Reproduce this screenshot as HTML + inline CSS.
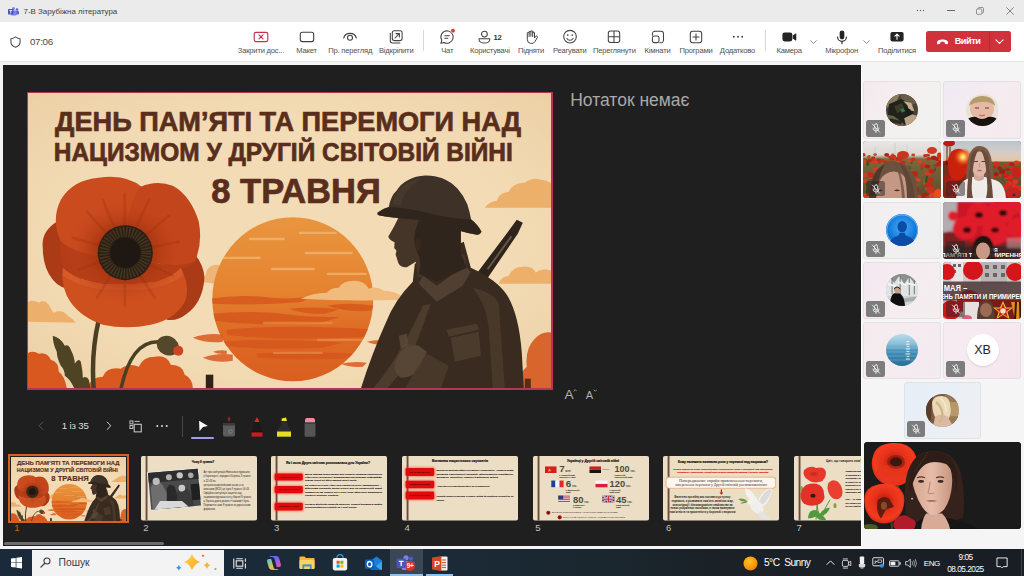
<!DOCTYPE html>
<html lang="uk">
<head>
<meta charset="utf-8">
<title>7-В Зарубіжна література</title>
<style>
*{box-sizing:border-box;margin:0;padding:0}
html,body{width:1024px;height:576px;overflow:hidden;background:#f5f5f5;font-family:"Liberation Sans",sans-serif;}
#app{position:relative;width:1024px;height:576px;overflow:hidden;background:#f5f5f5}
.abs{position:absolute}
#titlebar{left:0;top:0;width:1024px;height:22px;background:#ebebeb}
#titlebar .t{left:23.600px;top:7px;font-size:7.900px;line-height:10px;color:#3c3c3c;white-space:nowrap}
#toolbar{left:0;top:22px;width:1024px;height:38.500px;background:#fff;box-shadow:0 0.500px 1.500px rgba(0,0,0,0.16)}
.tb{position:absolute;top:0;width:0;height:40px;font-size:7.600px;letter-spacing:-0.200px;color:#505050;white-space:nowrap}
.tb svg{position:absolute;left:-10px;top:4px;width:20px;height:20px;overflow:visible}
.tb span{position:absolute;left:-40px;width:80px;top:23.900px;text-align:center;line-height:10px}
#stage{left:3.100px;top:64.800px;width:857.700px;height:481.400px;background:#1f1f1f;overflow:hidden}
#slide{background:#b83358;overflow:hidden}
#slide>svg{position:absolute;left:1.600px;top:1.600px}
#right{left:861px;top:62px;width:163px;height:487px;background:#f5f5f5}
#taskbar{left:0;top:549.300px;width:1024px;height:27px;background:linear-gradient(90deg,#1b2a3a 0%,#1b2a36 45%,#1a272f 58%,#1b2127 70%,#191e25 100%)}
.tile{position:absolute;border-radius:3px;overflow:hidden;background:#ece8ee}
#right .tile{border-radius:3.500px;box-shadow:inset 0 0 0 0.700px rgba(0,0,0,0.07)}
.badge{position:absolute;width:18.700px;height:16.200px;border-radius:2.500px;background:#7c7c7c;display:flex;align-items:center;justify-content:center}
.badge.bd{background:rgba(60,50,45,0.55)}
.av{position:absolute;border-radius:50%;overflow:hidden}
.av svg{display:block}
.sep{top:8px;width:1px;height:21px;background:#d6d6d6}
#leave{left:925.900px;top:9px;width:84.700px;height:21px;border-radius:2.500px;background:#d0323c;color:#fff;font-weight:bold;font-size:9.200px;letter-spacing:-0.450px;white-space:nowrap}
.fa{color:#b0b0b0;line-height:1;white-space:nowrap}
.tn{font-size:9.500px;line-height:11px;white-space:nowrap}
.tk{color:#fff;white-space:nowrap}
.badge.bv{background:rgba(40,34,34,0.5);height:15.700px}

</style>
</head>
<body>
<div id="app">
<div id="titlebar" class="abs">
<svg class="abs" viewBox="0 0 22 18" width="11" height="9" style="left:8px;top:6.700px"><circle cx="18" cy="5" r="2.600" fill="#5b5fc7"/><rect x="14" y="8" width="8" height="7" rx="2" fill="#5b5fc7"/><circle cx="11" cy="3.200" r="3" fill="#7b83eb"/><rect x="6" y="7" width="11" height="10" rx="2" fill="#7b83eb"/><rect x="0" y="4" width="11" height="11" rx="1.500" fill="#4b53bc"/><path d="M2.800,7 h5.400 M5.500,7 v6" stroke="#fff" stroke-width="1.600"/></svg>
<div class="abs t">7-В Зарубіжна література</div>
<svg class="abs" viewBox="0 0 12 4" width="9" height="3" style="left:915.500px;top:9px"><circle cx="2" cy="2" r="0.900" fill="#6a6a6a"/><circle cx="6" cy="2" r="0.900" fill="#6a6a6a"/><circle cx="10" cy="2" r="0.900" fill="#6a6a6a"/></svg>
<div class="abs" style="left:947px;top:10px;width:7.500px;height:1px;background:#6a6a6a"></div>
<svg class="abs" viewBox="0 0 10 10" width="8" height="8" style="left:976px;top:6.500px"><rect x="0.600" y="2.400" width="6.800" height="6.800" rx="1.600" fill="none" stroke="#6a6a6a" stroke-width="0.900"/><path d="M2.600,2.200 v-0.200 a1.400,1.400 0 0 1 1.400,-1.400 h4 a1.400,1.400 0 0 1 1.400,1.400 v4 a1.400,1.400 0 0 1 -1.400,1.400 h-0.400" fill="none" stroke="#6a6a6a" stroke-width="0.900"/></svg>
<svg class="abs" viewBox="0 0 10 10" width="8" height="8" style="left:1005.500px;top:6.800px"><path d="M0.800,0.800 l8.400,8.400 M9.200,0.800 l-8.400,8.400" stroke="#6a6a6a" stroke-width="1" stroke-linecap="round"/></svg>
</div>
<div id="toolbar" class="abs">
<svg class="abs" viewBox="0 0 12 13" width="11" height="12" style="left:9.500px;top:13.500px"><path d="M6,1 C7.500,2.200 9.200,2.800 11,2.900 V6.500 C11,9.300 9,11.200 6,12.200 C3,11.200 1,9.300 1,6.500 V2.900 C2.800,2.800 4.500,2.200 6,1z" fill="none" stroke="#424242" stroke-width="1.100" stroke-linejoin="round"/></svg>
<div class="abs" style="left:30px;top:14px;font-size:9.800px;line-height:11px;color:#4a4a4a;letter-spacing:-0.350px" id="tmr">07:06</div>
<div class="tb" style="left:261px"><svg viewBox="0 0 20 20" width="20" height="20" style="left:-10.0px;top:4.6px;"><rect x="3.200" y="5.300" width="13.600" height="9.300" rx="1.800" fill="none" stroke="#c4314b" stroke-width="1.150"/><path d="M8,7.900 l4,4 M12,7.900 l-4,4" stroke="#c4314b" stroke-width="1.150" stroke-linecap="round"/></svg><span>Закрити дос...</span></div><div class="tb" style="left:306.5px"><svg viewBox="0 0 20 20" width="20" height="20" style="left:-10.0px;top:4.6px;"><rect x="3.300" y="5.300" width="13.400" height="9.300" rx="2" fill="none" stroke="#424242" stroke-width="1.100"/></svg><span>Макет</span></div><div class="tb" style="left:350.2px"><svg viewBox="0 0 20 20" width="20" height="20" style="left:-10.0px;top:4.6px;"><path d="M3.700,11 C5.200,4.800 14.800,4.800 16.300,11" fill="none" stroke="#424242" stroke-width="1.100" stroke-linecap="round"/><circle cx="10" cy="10.800" r="2.500" fill="none" stroke="#424242" stroke-width="1.100"/></svg><span>Пр. перегляд</span></div><div class="tb" style="left:396.2px"><svg viewBox="0 0 20 20" width="20" height="20" style="left:-10.0px;top:4.6px;"><rect x="6.300" y="3.800" width="9.800" height="9.800" rx="2" fill="none" stroke="#424242" stroke-width="1.050"/><path d="M4.300,6.200 v7.500 a2.200,2.200 0 0 0 2.200,2.200 h7.400" fill="none" stroke="#424242" stroke-width="1.050" stroke-linecap="round"/><path d="M9,11 l4.300,-4.300 M10,6.600 h3.400 v3.400" fill="none" stroke="#424242" stroke-width="1.050" stroke-linecap="round" stroke-linejoin="round"/></svg><span>Відкріпити</span></div><div class="tb" style="left:447.2px"><svg viewBox="0 0 20 20" width="20" height="20" style="left:-10.0px;top:4.6px;"><path d="M10,3.800 a6.200,6.200 0 1 1 -3,11.650 l-3.100,0.900 l0.900,-3.100 A6.200,6.200 0 0 1 10,3.800z" fill="none" stroke="#424242" stroke-width="1.050" stroke-linejoin="round"/><path d="M7.800,8.700 h4.600 M7.800,11.300 h3" stroke="#424242" stroke-width="1.050" stroke-linecap="round"/><circle cx="16" cy="3.700" r="2.300" fill="#cc4a31" stroke="#fff" stroke-width="0.600"/></svg><span>Чат</span></div><div class="tb" style="left:489.8px"><svg viewBox="0 0 20 20" width="20" height="20" style="left:-10.0px;top:4.6px;"><circle cx="4.400" cy="7.100" r="2.900" fill="none" stroke="#424242" stroke-width="1.050"/><path d="M-1,11.800 h10.800 v0.600 a5.400,3.600 0 0 1 -10.800,0z" fill="none" stroke="#424242" stroke-width="1.050" stroke-linejoin="round"/><text x="13.600" y="12.700" font-family="'Liberation Sans',sans-serif" font-weight="bold" font-size="7.600" fill="#333">12</text></svg><span>Користувачі</span></div><div class="tb" style="left:531.0px"><svg viewBox="0 0 20 20" width="20" height="20" style="left:-10.0px;top:4.6px;"><path d="M6.300,11.500 V6.200 a0.900,0.900 0 0 1 1.800,0 V5 a0.900,0.900 0 0 1 1.800,0 V4.700 a0.900,0.900 0 0 1 1.800,0 V6 a0.900,0.900 0 0 1 1.800,0 V11 l1.300,-1.700 a1,1 0 0 1 1.600,1.100 l-2.300,4 a4.300,4.300 0 0 1 -3.700,2.100 h-0.600 a3.800,3.800 0 0 1 -3.500,-3.800z M8.100,6.200 V9.500 M9.900,5 V9.300 M11.700,5 V9.500" fill="none" stroke="#424242" stroke-width="1" stroke-linejoin="round" stroke-linecap="round"/></svg><span>Підняти</span></div><div class="tb" style="left:569.8px"><svg viewBox="0 0 20 20" width="20" height="20" style="left:-10.0px;top:4.6px;"><circle cx="10" cy="9.700" r="6.300" fill="none" stroke="#424242" stroke-width="1.050"/><circle cx="7.700" cy="8" r="0.850" fill="#424242"/><circle cx="12.300" cy="8" r="0.850" fill="#424242"/><path d="M6.900,11.400 a3.600,3.600 0 0 0 6.200,0" fill="none" stroke="#424242" stroke-width="1.050" stroke-linecap="round"/></svg><span>Реагувати</span></div><div class="tb" style="left:614.3px"><svg viewBox="0 0 20 20" width="20" height="20" style="left:-10.0px;top:4.6px;"><rect x="4.300" y="4" width="11.400" height="11.400" rx="2.200" fill="none" stroke="#424242" stroke-width="1.050"/><path d="M10,4 v11.400 M4.300,9.700 h11.400" stroke="#424242" stroke-width="1.050"/></svg><span>Переглянути</span></div><div class="tb" style="left:657.5px"><svg viewBox="0 0 20 20" width="20" height="20" style="left:-10.0px;top:4.6px;"><path d="M6.800,4.300 h6.300 a2.400,2.400 0 0 1 2.400,2.400 v6.600 a2.400,2.400 0 0 1 -2.400,2.400 h-1.400" fill="none" stroke="#424242" stroke-width="1.050" stroke-linecap="round"/><rect x="4.400" y="9" width="6.600" height="6.600" rx="1.900" fill="none" stroke="#424242" stroke-width="1.050"/><path d="M4.400,8.200 v-1.500 a2.400,2.400 0 0 1 2.400,-2.400" fill="none" stroke="#424242" stroke-width="1.050" stroke-linecap="round"/></svg><span>Кімнати</span></div><div class="tb" style="left:696px"><svg viewBox="0 0 20 20" width="20" height="20" style="left:-10.0px;top:4.6px;"><rect x="4.300" y="4.300" width="11.400" height="11.400" rx="2.400" fill="none" stroke="#424242" stroke-width="1.050"/><path d="M10,6.900 v6.200 M6.900,10 h6.200" stroke="#424242" stroke-width="1.050" stroke-linecap="round"/></svg><span>Програми</span></div><div class="tb" style="left:737.5px"><svg viewBox="0 0 20 20" width="20" height="20" style="left:-10.0px;top:4.6px;"><circle cx="5.800" cy="9.700" r="0.950" fill="#424242"/><circle cx="10" cy="9.700" r="0.950" fill="#424242"/><circle cx="14.200" cy="9.700" r="0.950" fill="#424242"/></svg><span>Додатково</span></div><div class="tb" style="left:789.2px"><svg viewBox="0 0 20 20" width="20" height="20" style="left:-10.0px;top:4.6px;"><rect x="3.400" y="5.500" width="10" height="8.900" rx="2.300" fill="#242424"/><path d="M13.900,8.600 l2.600,-2 a0.500,0.500 0 0 1 0.800,0.400 v6 a0.500,0.500 0 0 1 -0.800,0.400 l-2.600,-2z" fill="#242424"/></svg><span>Камера</span></div><div class="tb" style="left:841.7px"><svg viewBox="0 0 20 20" width="20" height="20" style="left:-10.0px;top:4.6px;"><rect x="7.650" y="3.400" width="4.700" height="9" rx="2.350" fill="#242424"/><path d="M5.600,10 a4.400,4.400 0 0 0 8.800,0 M10,14.500 v2.300" fill="none" stroke="#242424" stroke-width="1.100" stroke-linecap="round"/></svg><span>Мікрофон</span></div><div class="tb" style="left:897px"><svg viewBox="0 0 20 20" width="20" height="20" style="left:-10.0px;top:4.6px;"><rect x="3.400" y="5" width="13.200" height="9.400" rx="1.800" fill="#242424"/><path d="M10,12.300 v-5 M7.900,9.200 l2.100,-2.100 l2.100,2.100" fill="none" stroke="#fff" stroke-width="1.100" stroke-linecap="round" stroke-linejoin="round"/></svg><span>Поділитися</span></div>
<div class="abs sep" style="left:422.500px"></div>
<div class="abs sep" style="left:764.500px"></div>
<svg class="abs" viewBox="0 0 10 6" width="7" height="4.200" style="left:809.5px;top:17.500px"><path d="M1,1 l4,4 l4,-4" fill="none" stroke="#6a6a6a" stroke-width="1.100" stroke-linecap="round" stroke-linejoin="round"/></svg><svg class="abs" viewBox="0 0 10 6" width="7" height="4.200" style="left:862.8px;top:17.500px"><path d="M1,1 l4,4 l4,-4" fill="none" stroke="#6a6a6a" stroke-width="1.100" stroke-linecap="round" stroke-linejoin="round"/></svg>
<div id="leave" class="abs"><svg class="abs" viewBox="0 0 16 8" width="13" height="6" style="left:10px;top:7.700px"><path d="M0.600,5 C0.600,2 4,0.600 8,0.600 S15.400,2 15.400,5 c0,1.200 -0.400,2 -1.200,2 l-2.400,-0.500 c-0.600,-0.150 -0.900,-0.600 -0.900,-1.200 v-1.100 c-1.800,-0.600 -4,-0.600 -5.800,0 v1.100 c0,0.600 -0.300,1.050 -0.900,1.200 l-2.400,0.500 C1,7 0.600,6.200 0.600,5z" fill="#fff"/></svg><span class="abs" style="left:28.800px;top:5.300px;line-height:11px">Вийти</span><div class="abs" style="left:63.200px;top:0;width:1px;height:21px;background:rgba(120,0,10,0.22)"></div><svg class="abs" viewBox="0 0 10 6" width="9" height="5.400" style="left:69.300px;top:8.300px"><path d="M1,1 l4,4 l4,-4" fill="none" stroke="#fff" stroke-width="1.200" stroke-linecap="round" stroke-linejoin="round"/></svg></div>
</div>
<div id="stage" class="abs">
<div id="slide" class="abs" style="left:23.5px;top:26.9px;width:526.400px;height:298.300px"><svg width="522.6" height="294.9" viewBox="1.2 1.3 522.6 294.9" preserveAspectRatio="none" style="display:block;">
<defs>
<linearGradient id="msun" x1="0" y1="0" x2="0" y2="1"><stop offset="0" stop-color="#e9953f"/><stop offset="0.45" stop-color="#e5832f"/><stop offset="0.7" stop-color="#de6a24"/><stop offset="1" stop-color="#d95f20"/></linearGradient>
<radialGradient id="mpop" cx="0.5" cy="0.5" r="0.5"><stop offset="0" stop-color="#8c2609"/><stop offset="0.45" stop-color="#a5330f" stop-opacity="0.95"/><stop offset="0.72" stop-color="#b83e16" stop-opacity="0.45"/><stop offset="1" stop-color="#c94a1d" stop-opacity="0"/></radialGradient>
<radialGradient id="mvig" cx="0.5" cy="0.5" r="0.75"><stop offset="0.55" stop-color="#d9a35f" stop-opacity="0"/><stop offset="1" stop-color="#c98a48" stop-opacity="0.18"/></radialGradient><clipPath id="mclip"><rect x="0" y="0" width="525" height="297"/></clipPath>
<clipPath id="msunclip"><ellipse cx="266" cy="207.600" rx="80.500" ry="82"/></clipPath>
</defs>
<g clip-path="url(#mclip)">
<rect width="525" height="297" fill="#f2dbb5"/><rect width="525" height="297" fill="url(#mvig)"/>
<!-- clouds -->
<path fill="#ecb06c" d="M0,230 L0,211 q6,-4 12,0 q5,-4 10,2 q3,6 5,8 q8,-4 14,3 q5,3 8,7 z"/>
<path fill="#edb678" d="M172,190 q2,-6 7,-7 q1,-9 10,-10 q9,0 11,8 q6,-4 12,1 q8,-1 12,4 q10,0 16,3 q6,1 10,3 l-4,1 q-40,1 -74,-3z"/>
<path fill="#edb06a" d="M458,116 q4,-6 12,-7 q2,-8 12,-9 q4,-9 16,-9 q8,-6 16,-3 q8,1 11,4 L525,116 z"/>
<path fill="#edb06a" d="M472,192 q2,-7 10,-8 q4,-9 14,-9 q10,-1 13,6 q6,-5 16,-2 L525,192 z"/>
<!-- sun -->
<ellipse cx="266" cy="207.600" rx="80.500" ry="82" fill="url(#msun)"/>
<g clip-path="url(#msunclip)">
<g fill="#f2bb78" opacity="0.7">
<rect x="222" y="146" width="36" height="2.600" rx="1.300"/><rect x="272" y="140" width="38" height="2.400" rx="1.200"/>
<rect x="278" y="160" width="48" height="2.600" rx="1.300"/><rect x="190" y="165" width="44" height="2.200" rx="1.100"/>
<rect x="244" y="176" width="44" height="2.600" rx="1.300"/><rect x="300" y="181" width="40" height="2.200" rx="1.100"/>
</g>
<g fill="#d5561c" opacity="0.8">
<path d="M184,207 q30,-5 60,-1 q20,2 38,-1 l-6,5 q-40,4 -92,2z"/>
<path d="M262,217 q30,-3 50,1 l-14,4 q-20,1 -36,-5z"/>
<path d="M300,214 q20,-4 48,0 l-4,5 q-24,2 -44,-5z"/>
<path d="M186,222 q40,-4 78,1 q24,3 50,2 l-20,6 q-60,4 -108,-2z"/>
<path d="M200,238 q60,-6 150,0 l-10,7 q-80,5 -140,-2z"/>
<path d="M196,250 q50,-4 120,1 l-20,5 q-60,3 -100,-2z"/>
<path d="M230,262 q40,-3 100,0 l-14,5 q-50,2 -86,-1z"/>
</g>
<g fill="#ec9a50" opacity="0.55">
<rect x="236" y="230" width="70" height="2.600" rx="1.300"/><rect x="290" y="247" width="52" height="2.400" rx="1.200"/><rect x="246" y="260" width="50" height="2.200" rx="1.100"/>
</g>
</g>
<path fill="#d85a1e" opacity="0.85" d="M166,246 q14,-5 30,-3 l0,7 q-16,2 -30,-4z M176,266 q14,-5 30,-3 l0,6 q-16,3 -30,-3z M186,260 q8,-2 14,-1 l0,3 q-8,1 -14,-2z M340,250 q10,-3 24,-1 l-2,4 q-12,1 -22,-3z M314,272 q14,-3 26,-1 l-4,4 q-12,1 -22,-3z"/>
<!-- cloud over sun -->
<path fill="#f0bb7c" d="M274,207 q12,-6 26,-6 q4,-5 12,-5 q4,-7 15,-7 q11,0 15,8 q8,-3 15,2 q10,0 20,6 l-3,3 q-50,2 -100,-1z"/>
<!-- bottom bushes -->
<path fill="#d9581f" d="M0,297 L0,262 q6,-4 12,0 q8,-2 12,6 q8,2 8,12 q6,4 8,17 z"/>
<path fill="#d9581f" d="M60,297 q4,-12 16,-12 q4,-10 18,-8 q8,-6 18,-2 q4,-10 16,-10 q12,-2 16,8 q12,0 14,10 q8,4 8,14 z"/>
<path fill="#d8652c" d="M494,297 q-2,-16 6,-22 q-2,-18 8,-28 q8,-8 17,-6 L525,297 z"/>
<!-- leaf -->
<path fill="#4e4424" d="M26,244 q8,2 12,10 q4,-2 6,4 q4,8 4,14 q4,-6 6,-2 q2,10 2,16 q4,-2 6,2 l2,10 l-16,0 q-4,-10 -10,-14 q0,-6 -4,-10 q-4,-8 -4,-14 q-4,-8 -4,-16z"/>
<!-- stems -->
<path fill="none" stroke="#4a3f23" stroke-width="4.5" stroke-linecap="round" d="M72,228 Q64,262 67,298"/>
<path fill="none" stroke="#4a3f23" stroke-width="3.5" stroke-linecap="round" d="M131,250 Q104,250 94,298"/>
<!-- bud -->
<ellipse cx="141" cy="254" rx="11.5" ry="9.5" fill="#54472a" transform="rotate(25 141 254)"/>
<circle cx="151.500" cy="259" r="5" fill="#cf4420"/>
<!-- poppy -->
<g>
<path d="M30,130 Q14,140 16,156 Q16,176 26,188 Q34,198 48,198 L70,160 Z" fill="#ab3b17"/>
<path d="M166,160 Q180,176 177,192 Q174,212 160,222 Q150,230 140,228 L120,180 Z" fill="#ab3b17"/>
<path d="M98.500,161 Q60,170 34,150 Q24,128 34,108 Q46,88 72,86 Q100,82 116,96 Q122,120 98.500,161 Z" fill="#ca4b1e"/>
<path d="M98.500,161 Q100,110 114,95 Q130,88 146,94 Q164,104 172,130 Q176,152 168,170 Q140,180 98.500,161 Z" fill="#c2451b"/>
<path d="M36,176 Q60,196 98.500,192 Q136,194 154,176 Q164,196 158,210 Q148,228 124,233 Q100,238 76,233 Q50,224 40,204 Q34,190 36,176 Z" fill="#cf501f"/>
<path d="M36,176 Q60,196 98.500,192 Q136,194 154,176 Q156,180 156,184 Q134,200 98.500,198 Q60,200 36,184 Z" fill="#dc6530" opacity="0.55"/>
<path d="M34,150 Q60,170 98.500,161 Q140,180 168,170 Q164,176 154,176 Q136,194 98.500,192 Q60,196 36,176 Q32,164 34,150z" fill="#b43d17"/>
<ellipse cx="98" cy="160" rx="60" ry="54" fill="url(#mpop)" opacity="0.9"/>
<g stroke="#8e2a0c" stroke-width="2.600" opacity="0.22" stroke-linecap="round">
<path d="M98,161 L60,120 M98,161 L76,108 M98,161 L98,102 M98,161 L122,108 M98,161 L142,124 M98,161 L152,150 M98,161 L46,146 M98,161 L52,178 M98,161 L70,206 M98,161 L98,214 M98,161 L128,206 M98,161 L146,184"/>
</g>
<circle cx="98.500" cy="161" r="27.500" fill="#2b2016"/>
<circle cx="98.500" cy="161" r="21" fill="none" stroke="#43341f" stroke-width="10" stroke-dasharray="1.500 1.500"/>
<circle cx="98.500" cy="161" r="15" fill="#1f1711"/>
</g>
<!-- post -->
<rect x="179" y="283" width="7.500" height="14" fill="#2f2219"/>
<rect x="498" y="287" width="6" height="10" fill="#5a2c18"/>
<!-- rifle -->
<path fill="#2f241b" d="M490,128 l6,3 l-5,11 l-32,47 l-10,-6 l30,-40 z"/>
<path fill="#6a5a48" d="M484,144 l1.500,1 l-24,33 l-1.500,-1z"/>
<!-- soldier body -->
<path fill="#3a2b20" d="M334,297 Q345,262 359,231 Q368,208 386,190 L388,172 L437,150 L444,176 Q470,188 480,203 Q492,222 495,261 L497,297 Z"/>
<!-- lighter uniform details -->
<path fill="#514032" d="M392,192 l18,18 l26,-16 l8,-14 l-6,-6 l-28,20 l-14,-10z"/>
<path fill="#4c3c2e" d="M396,214 l8,-2 l-22,60 l-22,25 l-14,0 q26,-30 50,-83z"/>
<path fill="#4c3c2d" d="M446,196 q20,4 26,16 l6,85 l-12,0 l-4,-60 q-2,-24 -16,-41z" opacity="0.8"/>
<path fill="#4e3e30" d="M420,238 l30,-6 l2,6 l-30,7z M424,246 l28,-6 l2,24 l-26,6z" opacity="0.85"/>
<path fill="#5b4938" d="M372,244 l8,-2 l2,12 l-8,3z" opacity="0.85"/>
<!-- hand -->
<path fill="#574535" d="M372,262 q8,-10 20,-8 l8,6 l-4,10 q-6,16 -22,16 q-8,-6 -6,-14z"/>
<path fill="#4a3a2b" d="M400,262 l22,12 l-8,23 l-36,0 q10,-18 22,-35z" opacity="0.9"/>
<!-- head -->
<path fill="#443528" d="M373,116 L371.600,126 L367,135.300 L361.500,144.800 Q362,148 367.800,150.500 L367.400,156.300 L369.700,159 L368.800,162.500 L371.600,171.500 Q374,176 380,175.500 L389,170 L391,186 L440,176 L438,164 L434,162 L434,120 Z"/>
<path fill="#30251c" d="M392,122 L434,126 L434,162 L440,176 L410,190 L392,182 Q396,170 390,160 Q384,146 392,130z"/>
<path fill="#3a2d22" d="M388,150 q4,-6 6,0 q0,6 -3,10 q-3,-4 -3,-10z" opacity="0.8"/>
<!-- helmet -->
<path fill="#3e3127" d="M350.600,121 Q355,117 362,115.200 Q364,104 369.700,99 Q374,92 381,88.500 Q389,84 398.400,83.700 Q408,83.500 415.500,86.600 Q424,90 430.800,97 Q437,104 440.400,112.400 Q443,120 444.200,127.600 Q451,133 454.700,140 Q453,143.500 450,143 Q441,141.500 432.700,139 Q420,135.500 409.800,132.400 Q398,129.500 387,127.600 Q376,126.500 366,125.700 Q358,125 352.500,123.800 Q350,123 350.600,121 Z"/>
<path fill="#4d3f31" d="M366,112 Q368,102 375,95 Q384,88 396,86.500 Q386,92 380,100 Q375,107 374,114 z" opacity="0.6"/>
<path fill="#2c221a" d="M362,115.200 Q380,116 400,121 Q424,127 444.200,127.600 Q451,133 454.700,140 Q453,143.500 450,143 Q441,141.500 432.700,139 Q420,135.500 409.800,132.400 Q398,129.500 387,127.600 Q376,126.500 366,125.700 Q358,125 352.500,123.800 Q350,123 350.600,121 Q355,117 362,115.200z" opacity="0.75"/>

<g font-family="'Liberation Sans',sans-serif" font-weight="bold" fill="#5a2e1d" stroke="#5a2e1d" stroke-width="0.700" stroke-linejoin="round">
<text x="28.300" y="39.250" font-size="27.800" textLength="466" lengthAdjust="spacingAndGlyphs">ДЕНЬ ПАМ’ЯТІ ТА ПЕРЕМОГИ НАД</text>
<text x="27" y="68.900" font-size="25.400" textLength="459" lengthAdjust="spacingAndGlyphs">НАЦИЗМОМ У ДРУГІЙ СВІТОВІЙ ВІЙНІ</text>
<text x="184.500" y="111.100" font-size="35.500" textLength="169.500" lengthAdjust="spacingAndGlyphs">8 ТРАВНЯ</text>
</g>
</g></svg></div>
<div class="abs" style="left:567.1px;top:25.4px;font-size:17.500px;line-height:20px;color:#a9a9a9;white-space:nowrap" id="notes">Нотаток немає</div>
<div class="abs fa" style="left:561.3px;top:322.9px;font-size:13.600px">A</div><svg class="abs" viewBox="0 0 6 4" width="4.500" height="3" style="left:569.7px;top:324.2px"><path d="M0.800,3.200 L3,0.900 L5.200,3.200" fill="none" stroke="#b0b0b0" stroke-width="1"/></svg>
<div class="abs fa" style="left:582.7px;top:325.1px;font-size:11px">A</div><svg class="abs" viewBox="0 0 6 4" width="4.500" height="3" style="left:589.8px;top:324.2px"><path d="M0.800,0.800 L3,3.100 L5.200,0.800" fill="none" stroke="#b0b0b0" stroke-width="1"/></svg>
<svg class="abs" viewBox="0 0 8 12" width="6" height="9.500" style="left:35.2px;top:356.7px"><path d="M6.500,1 L1.500,6 L6.500,11" fill="none" stroke="#5a5a5a" stroke-width="1.300" stroke-linecap="round" stroke-linejoin="round"/></svg>
<div class="abs" style="left:58.7px;top:355.5px;font-size:9.600px;line-height:12px;color:#dedede;white-space:nowrap;letter-spacing:-0.150px" id="cnt">1 із 35</div>
<svg class="abs" viewBox="0 0 8 12" width="6" height="9.500" style="left:103.3px;top:356.7px"><path d="M1.500,1 L6.500,6 L1.500,11" fill="none" stroke="#d6d6d6" stroke-width="1.300" stroke-linecap="round" stroke-linejoin="round"/></svg>
<svg class="abs" viewBox="0 0 14 14" width="13" height="13" style="left:126.1px;top:355.0px"><rect x="1" y="1" width="3.200" height="3.200" fill="none" stroke="#d0d0d0" stroke-width="1"/><rect x="1" y="6" width="3.200" height="3.200" fill="none" stroke="#d0d0d0" stroke-width="1"/><path d="M6,1.500 h5.500" stroke="#d0d0d0" stroke-width="1"/><rect x="5.600" y="4.600" width="7.600" height="8.200" fill="#1f1f1f" stroke="#d0d0d0" stroke-width="1.100"/></svg>
<svg class="abs" viewBox="0 0 14 4" width="14" height="4" style="left:152.1px;top:359.5px"><circle cx="2.300" cy="2" r="1" fill="#dcdcdc"/><circle cx="7" cy="2" r="1" fill="#dcdcdc"/><circle cx="11.700" cy="2" r="1" fill="#dcdcdc"/></svg>
<div class="abs" style="left:179.1px;top:351.2px;width:1px;height:21.500px;background:#484848"></div>
<svg class="abs" viewBox="0 0 12 13" width="11" height="12" style="left:194.5px;top:355.6px"><path d="M1.200,0.800 L10.800,6.600 L5.400,7.600 L1.600,12.200 Z" fill="#fff"/></svg>
<div class="abs" style="left:188.1px;top:372.2px;width:22.500px;height:1.800px;border-radius:1px;background:#9ea0e6"></div>
<svg class="abs" viewBox="0 0 16 22" width="16" height="22" style="left:218.3px;top:350.8px"><path d="M8,1.200 v4" stroke="#d82020" stroke-width="1.200"/><path d="M6.500,2.800 h3" stroke="#d82020" stroke-width="0.800"/><rect x="2" y="7" width="12" height="13.500" rx="1.800" fill="#5c5c5c"/><rect x="2" y="7" width="12" height="2.500" rx="1.200" fill="#3a3a3a"/><circle cx="9.500" cy="15.500" r="1.800" fill="none" stroke="#8a8a8a" stroke-width="0.800"/></svg>
<svg class="abs" viewBox="0 0 16 22" width="16" height="22" style="left:245.5px;top:350.8px"><path d="M8,1 L10.600,6 L5.400,6 Z" fill="#e02828"/><path d="M5.400,6 L10.600,6 L13.400,16 L2.600,16 Z" fill="#1a1a1a"/><rect x="2.600" y="16" width="10.800" height="4.600" fill="#c81c24"/><path d="M2.600,16 h10.800" stroke="#111" stroke-width="0.800"/></svg>
<svg class="abs" viewBox="0 0 18 22" width="18" height="22" style="left:271.5px;top:350.8px"><path d="M6.600,2.600 L11,1.400 L12,5 L6.600,5 Z" fill="#f0e030"/><path d="M6.400,5 L12.200,5 L13,9 L16,15.500 L2,15.500 L5.600,9 Z" fill="#2c2c2c"/><rect x="2" y="15.500" width="14" height="5.200" fill="#e6dc28"/></svg>
<svg class="abs" viewBox="0 0 14 22" width="14" height="22" style="left:299.7px;top:350.8px"><rect x="2" y="2" width="10" height="7" rx="2" fill="#f08aa0"/><rect x="1.600" y="6.400" width="10.800" height="14.400" rx="1.400" fill="#555"/><rect x="1.600" y="6.400" width="10.800" height="1.400" fill="#3c3c3c"/></svg>
<div class="abs" style="left:4.9px;top:389.0px;width:120.600px;height:69.600px;border:2px solid #d4611f;padding:0.800px;background:#1f1f1f"><div style="width:100%;height:100%;overflow:hidden"><svg width="115" height="64" viewBox="1.2 1.3 522.6 294.9" preserveAspectRatio="none" style="display:block;">
<defs>
<linearGradient id="tsun" x1="0" y1="0" x2="0" y2="1"><stop offset="0" stop-color="#e9953f"/><stop offset="0.45" stop-color="#e5832f"/><stop offset="0.7" stop-color="#de6a24"/><stop offset="1" stop-color="#d95f20"/></linearGradient>
<radialGradient id="tpop" cx="0.5" cy="0.5" r="0.5"><stop offset="0" stop-color="#8c2609"/><stop offset="0.45" stop-color="#a5330f" stop-opacity="0.95"/><stop offset="0.72" stop-color="#b83e16" stop-opacity="0.45"/><stop offset="1" stop-color="#c94a1d" stop-opacity="0"/></radialGradient>
<radialGradient id="tvig" cx="0.5" cy="0.5" r="0.75"><stop offset="0.55" stop-color="#d9a35f" stop-opacity="0"/><stop offset="1" stop-color="#c98a48" stop-opacity="0.18"/></radialGradient><clipPath id="tclip"><rect x="0" y="0" width="525" height="297"/></clipPath>
<clipPath id="tsunclip"><ellipse cx="266" cy="207.600" rx="80.500" ry="82"/></clipPath>
</defs>
<g clip-path="url(#tclip)">
<rect width="525" height="297" fill="#f2dbb5"/><rect width="525" height="297" fill="url(#tvig)"/>
<!-- clouds -->
<path fill="#ecb06c" d="M0,230 L0,211 q6,-4 12,0 q5,-4 10,2 q3,6 5,8 q8,-4 14,3 q5,3 8,7 z"/>
<path fill="#edb678" d="M172,190 q2,-6 7,-7 q1,-9 10,-10 q9,0 11,8 q6,-4 12,1 q8,-1 12,4 q10,0 16,3 q6,1 10,3 l-4,1 q-40,1 -74,-3z"/>
<path fill="#edb06a" d="M458,116 q4,-6 12,-7 q2,-8 12,-9 q4,-9 16,-9 q8,-6 16,-3 q8,1 11,4 L525,116 z"/>
<path fill="#edb06a" d="M472,192 q2,-7 10,-8 q4,-9 14,-9 q10,-1 13,6 q6,-5 16,-2 L525,192 z"/>
<!-- sun -->
<ellipse cx="266" cy="207.600" rx="80.500" ry="82" fill="url(#tsun)"/>
<g clip-path="url(#tsunclip)">
<g fill="#f2bb78" opacity="0.7">
<rect x="222" y="146" width="36" height="2.600" rx="1.300"/><rect x="272" y="140" width="38" height="2.400" rx="1.200"/>
<rect x="278" y="160" width="48" height="2.600" rx="1.300"/><rect x="190" y="165" width="44" height="2.200" rx="1.100"/>
<rect x="244" y="176" width="44" height="2.600" rx="1.300"/><rect x="300" y="181" width="40" height="2.200" rx="1.100"/>
</g>
<g fill="#d5561c" opacity="0.8">
<path d="M184,207 q30,-5 60,-1 q20,2 38,-1 l-6,5 q-40,4 -92,2z"/>
<path d="M262,217 q30,-3 50,1 l-14,4 q-20,1 -36,-5z"/>
<path d="M300,214 q20,-4 48,0 l-4,5 q-24,2 -44,-5z"/>
<path d="M186,222 q40,-4 78,1 q24,3 50,2 l-20,6 q-60,4 -108,-2z"/>
<path d="M200,238 q60,-6 150,0 l-10,7 q-80,5 -140,-2z"/>
<path d="M196,250 q50,-4 120,1 l-20,5 q-60,3 -100,-2z"/>
<path d="M230,262 q40,-3 100,0 l-14,5 q-50,2 -86,-1z"/>
</g>
<g fill="#ec9a50" opacity="0.55">
<rect x="236" y="230" width="70" height="2.600" rx="1.300"/><rect x="290" y="247" width="52" height="2.400" rx="1.200"/><rect x="246" y="260" width="50" height="2.200" rx="1.100"/>
</g>
</g>
<path fill="#d85a1e" opacity="0.85" d="M166,246 q14,-5 30,-3 l0,7 q-16,2 -30,-4z M176,266 q14,-5 30,-3 l0,6 q-16,3 -30,-3z M186,260 q8,-2 14,-1 l0,3 q-8,1 -14,-2z M340,250 q10,-3 24,-1 l-2,4 q-12,1 -22,-3z M314,272 q14,-3 26,-1 l-4,4 q-12,1 -22,-3z"/>
<!-- cloud over sun -->
<path fill="#f0bb7c" d="M274,207 q12,-6 26,-6 q4,-5 12,-5 q4,-7 15,-7 q11,0 15,8 q8,-3 15,2 q10,0 20,6 l-3,3 q-50,2 -100,-1z"/>
<!-- bottom bushes -->
<path fill="#d9581f" d="M0,297 L0,262 q6,-4 12,0 q8,-2 12,6 q8,2 8,12 q6,4 8,17 z"/>
<path fill="#d9581f" d="M60,297 q4,-12 16,-12 q4,-10 18,-8 q8,-6 18,-2 q4,-10 16,-10 q12,-2 16,8 q12,0 14,10 q8,4 8,14 z"/>
<path fill="#d8652c" d="M494,297 q-2,-16 6,-22 q-2,-18 8,-28 q8,-8 17,-6 L525,297 z"/>
<!-- leaf -->
<path fill="#4e4424" d="M26,244 q8,2 12,10 q4,-2 6,4 q4,8 4,14 q4,-6 6,-2 q2,10 2,16 q4,-2 6,2 l2,10 l-16,0 q-4,-10 -10,-14 q0,-6 -4,-10 q-4,-8 -4,-14 q-4,-8 -4,-16z"/>
<!-- stems -->
<path fill="none" stroke="#4a3f23" stroke-width="4.5" stroke-linecap="round" d="M72,228 Q64,262 67,298"/>
<path fill="none" stroke="#4a3f23" stroke-width="3.5" stroke-linecap="round" d="M131,250 Q104,250 94,298"/>
<!-- bud -->
<ellipse cx="141" cy="254" rx="11.5" ry="9.5" fill="#54472a" transform="rotate(25 141 254)"/>
<circle cx="151.500" cy="259" r="5" fill="#cf4420"/>
<!-- poppy -->
<g>
<path d="M30,130 Q14,140 16,156 Q16,176 26,188 Q34,198 48,198 L70,160 Z" fill="#ab3b17"/>
<path d="M166,160 Q180,176 177,192 Q174,212 160,222 Q150,230 140,228 L120,180 Z" fill="#ab3b17"/>
<path d="M98.500,161 Q60,170 34,150 Q24,128 34,108 Q46,88 72,86 Q100,82 116,96 Q122,120 98.500,161 Z" fill="#ca4b1e"/>
<path d="M98.500,161 Q100,110 114,95 Q130,88 146,94 Q164,104 172,130 Q176,152 168,170 Q140,180 98.500,161 Z" fill="#c2451b"/>
<path d="M36,176 Q60,196 98.500,192 Q136,194 154,176 Q164,196 158,210 Q148,228 124,233 Q100,238 76,233 Q50,224 40,204 Q34,190 36,176 Z" fill="#cf501f"/>
<path d="M36,176 Q60,196 98.500,192 Q136,194 154,176 Q156,180 156,184 Q134,200 98.500,198 Q60,200 36,184 Z" fill="#dc6530" opacity="0.55"/>
<path d="M34,150 Q60,170 98.500,161 Q140,180 168,170 Q164,176 154,176 Q136,194 98.500,192 Q60,196 36,176 Q32,164 34,150z" fill="#b43d17"/>
<ellipse cx="98" cy="160" rx="60" ry="54" fill="url(#tpop)" opacity="0.9"/>
<g stroke="#8e2a0c" stroke-width="2.600" opacity="0.22" stroke-linecap="round">
<path d="M98,161 L60,120 M98,161 L76,108 M98,161 L98,102 M98,161 L122,108 M98,161 L142,124 M98,161 L152,150 M98,161 L46,146 M98,161 L52,178 M98,161 L70,206 M98,161 L98,214 M98,161 L128,206 M98,161 L146,184"/>
</g>
<circle cx="98.500" cy="161" r="27.500" fill="#2b2016"/>
<circle cx="98.500" cy="161" r="21" fill="none" stroke="#43341f" stroke-width="10" stroke-dasharray="1.500 1.500"/>
<circle cx="98.500" cy="161" r="15" fill="#1f1711"/>
</g>
<!-- post -->
<rect x="179" y="283" width="7.500" height="14" fill="#2f2219"/>
<rect x="498" y="287" width="6" height="10" fill="#5a2c18"/>
<!-- rifle -->
<path fill="#2f241b" d="M490,128 l6,3 l-5,11 l-32,47 l-10,-6 l30,-40 z"/>
<path fill="#6a5a48" d="M484,144 l1.500,1 l-24,33 l-1.500,-1z"/>
<!-- soldier body -->
<path fill="#3a2b20" d="M334,297 Q345,262 359,231 Q368,208 386,190 L388,172 L437,150 L444,176 Q470,188 480,203 Q492,222 495,261 L497,297 Z"/>
<!-- lighter uniform details -->
<path fill="#514032" d="M392,192 l18,18 l26,-16 l8,-14 l-6,-6 l-28,20 l-14,-10z"/>
<path fill="#4c3c2e" d="M396,214 l8,-2 l-22,60 l-22,25 l-14,0 q26,-30 50,-83z"/>
<path fill="#4c3c2d" d="M446,196 q20,4 26,16 l6,85 l-12,0 l-4,-60 q-2,-24 -16,-41z" opacity="0.8"/>
<path fill="#4e3e30" d="M420,238 l30,-6 l2,6 l-30,7z M424,246 l28,-6 l2,24 l-26,6z" opacity="0.85"/>
<path fill="#5b4938" d="M372,244 l8,-2 l2,12 l-8,3z" opacity="0.85"/>
<!-- hand -->
<path fill="#574535" d="M372,262 q8,-10 20,-8 l8,6 l-4,10 q-6,16 -22,16 q-8,-6 -6,-14z"/>
<path fill="#4a3a2b" d="M400,262 l22,12 l-8,23 l-36,0 q10,-18 22,-35z" opacity="0.9"/>
<!-- head -->
<path fill="#443528" d="M373,116 L371.600,126 L367,135.300 L361.500,144.800 Q362,148 367.800,150.500 L367.400,156.300 L369.700,159 L368.800,162.500 L371.600,171.500 Q374,176 380,175.500 L389,170 L391,186 L440,176 L438,164 L434,162 L434,120 Z"/>
<path fill="#30251c" d="M392,122 L434,126 L434,162 L440,176 L410,190 L392,182 Q396,170 390,160 Q384,146 392,130z"/>
<path fill="#3a2d22" d="M388,150 q4,-6 6,0 q0,6 -3,10 q-3,-4 -3,-10z" opacity="0.8"/>
<!-- helmet -->
<path fill="#3e3127" d="M350.600,121 Q355,117 362,115.200 Q364,104 369.700,99 Q374,92 381,88.500 Q389,84 398.400,83.700 Q408,83.500 415.500,86.600 Q424,90 430.800,97 Q437,104 440.400,112.400 Q443,120 444.200,127.600 Q451,133 454.700,140 Q453,143.500 450,143 Q441,141.500 432.700,139 Q420,135.500 409.800,132.400 Q398,129.500 387,127.600 Q376,126.500 366,125.700 Q358,125 352.500,123.800 Q350,123 350.600,121 Z"/>
<path fill="#4d3f31" d="M366,112 Q368,102 375,95 Q384,88 396,86.500 Q386,92 380,100 Q375,107 374,114 z" opacity="0.6"/>
<path fill="#2c221a" d="M362,115.200 Q380,116 400,121 Q424,127 444.200,127.600 Q451,133 454.700,140 Q453,143.500 450,143 Q441,141.500 432.700,139 Q420,135.500 409.800,132.400 Q398,129.500 387,127.600 Q376,126.500 366,125.700 Q358,125 352.500,123.800 Q350,123 350.600,121 Q355,117 362,115.200z" opacity="0.75"/>

<g font-family="'Liberation Sans',sans-serif" font-weight="bold" fill="#5a2e1d" stroke="#5a2e1d" stroke-width="0.700" stroke-linejoin="round">
<text x="28.300" y="39.250" font-size="27.800" textLength="466" lengthAdjust="spacingAndGlyphs">ДЕНЬ ПАМ’ЯТІ ТА ПЕРЕМОГИ НАД</text>
<text x="27" y="68.900" font-size="25.400" textLength="459" lengthAdjust="spacingAndGlyphs">НАЦИЗМОМ У ДРУГІЙ СВІТОВІЙ ВІЙНІ</text>
<text x="184.500" y="111.100" font-size="35.500" textLength="169.500" lengthAdjust="spacingAndGlyphs">8 ТРАВНЯ</text>
</g>
</g></svg></div></div>
<svg class="abs" viewBox="0 0 116 65" width="116" height="64.600" preserveAspectRatio="none" style="left:137.5px;top:391.3px"><rect width="116" height="65" rx="1.800" fill="#ebdec4"/><rect x="4.600" y="0" width="1.900" height="65" fill="#6b4a40"/><text x="62" y="6.800" font-size="2.900" font-family="'Liberation Sans',sans-serif" font-weight="bold" fill="#2a211c" stroke="#2a211c" stroke-width="0.180" text-anchor="middle">Чому 8 травня?</text><g transform="rotate(-5 33 34)"><rect x="7.500" y="14" width="52" height="39" fill="#e9e7e2"/><rect x="8.500" y="15" width="50" height="37" fill="#4a4a4a"/><rect x="8.500" y="15" width="50" height="10" fill="#2d2d2d"/><path d="M10,52 l0,-22 q6,-10 12,-2 l4,10 l10,4 l0,10z" fill="#6e6e6e"/><circle cx="16" cy="24" r="3.600" fill="#bdbdbd"/><circle cx="29" cy="21" r="3" fill="#b0b0b0"/><circle cx="40" cy="20" r="3.200" fill="#c4c4c4"/><circle cx="51" cy="21" r="2.800" fill="#a9a9a9"/><path d="M24,52 l2,-20 q3,-6 8,-1 l4,21z" fill="#2a2a2a"/><path d="M34,52 l2,-16 q6,-8 12,0 l4,16z" fill="#3a3a3a"/><circle cx="41" cy="33" r="3.400" fill="#c9c9c9"/><path d="M12,52 l6,-8 l22,2 l6,6z" fill="#d9d9d9"/><rect x="50" y="30" width="8.500" height="16" fill="#202020"/></g><text x="62.500" y="17.5" font-size="2.600" font-family="'Liberation Sans',sans-serif" fill="#2b231d" textLength="46" lengthAdjust="spacingAndGlyphs">Акт про капітуляцію Німеччини підписали</text><text x="62.500" y="21.63" font-size="2.600" font-family="'Liberation Sans',sans-serif" fill="#2b231d" textLength="47" lengthAdjust="spacingAndGlyphs">у Карлсхорсті, передмісті Берліна, 8 травня</text><text x="62.500" y="25.76" font-size="2.600" font-family="'Liberation Sans',sans-serif" fill="#2b231d" textLength="12" lengthAdjust="spacingAndGlyphs">о 22:43 за</text><text x="62.500" y="29.89" font-size="2.600" font-family="'Liberation Sans',sans-serif" fill="#2b231d" textLength="40" lengthAdjust="spacingAndGlyphs">центральноєвропейським часом, а за</text><text x="62.500" y="34.02" font-size="2.600" font-family="'Liberation Sans',sans-serif" fill="#2b231d" textLength="46" lengthAdjust="spacingAndGlyphs">київським (МСК) це було 9 травня, 00:43.</text><text x="62.500" y="38.15" font-size="2.600" font-family="'Liberation Sans',sans-serif" fill="#2b231d" textLength="38" lengthAdjust="spacingAndGlyphs">Офіційно капітуляція нацистів над</text><text x="62.500" y="42.28" font-size="2.600" font-family="'Liberation Sans',sans-serif" fill="#2b231d" textLength="48" lengthAdjust="spacingAndGlyphs">нацизмом відзначається у Європі 8 травня,</text><text x="62.500" y="46.41" font-size="2.600" font-family="'Liberation Sans',sans-serif" fill="#2b231d" textLength="46" lengthAdjust="spacingAndGlyphs">а Україна довго разом з «нашими» була.</text><text x="62.500" y="50.54" font-size="2.600" font-family="'Liberation Sans',sans-serif" fill="#2b231d" textLength="47" lengthAdjust="spacingAndGlyphs">Перемогти саме 8 травня за українським</text><text x="62.500" y="54.67" font-size="2.600" font-family="'Liberation Sans',sans-serif" fill="#2b231d" textLength="12" lengthAdjust="spacingAndGlyphs">форматом.</text></svg>
<svg class="abs" viewBox="0 0 116 65" width="116" height="64.600" preserveAspectRatio="none" style="left:268.2px;top:391.3px"><defs><filter id="gl3" x="-30%" y="-60%" width="160%" height="220%"><feGaussianBlur stdDeviation="0.9"/></filter></defs><rect width="116" height="65" rx="1.800" fill="#ebdec4"/><rect x="4.600" y="0" width="1.900" height="65" fill="#6b4a40"/><text x="57" y="8" font-size="2.900" font-family="'Liberation Sans',sans-serif" font-weight="bold" fill="#2a211c" stroke="#2a211c" stroke-width="0.180" text-anchor="middle" textLength="84" lengthAdjust="spacingAndGlyphs">Як і коли Друга світова розпочалася для України?</text><rect x="2.8" y="16.8" width="29.8" height="8.6" rx="2" fill="#ff2a1a" opacity="0.55" filter="url(#gl3)"/><rect x="3.6" y="17.6" width="28.2" height="7" rx="1.500" fill="#e20a0a"/><text x="17.7" y="22.0" font-size="2.300" font-family="'Liberation Sans',sans-serif" font-weight="bold" fill="#3a0505" text-anchor="middle" textLength="20.2" lengthAdjust="spacingAndGlyphs">1 вересня 1939 року</text><rect x="2.8" y="29.4" width="29.8" height="8.8" rx="2" fill="#ff2a1a" opacity="0.55" filter="url(#gl3)"/><rect x="3.6" y="30.2" width="28.2" height="7.2" rx="1.500" fill="#e20a0a"/><text x="17.7" y="34.699999999999996" font-size="2.300" font-family="'Liberation Sans',sans-serif" font-weight="bold" fill="#3a0505" text-anchor="middle" textLength="20.2" lengthAdjust="spacingAndGlyphs">22 червня 1941 року</text><rect x="2.8" y="46.2" width="29.8" height="9.4" rx="2" fill="#ff2a1a" opacity="0.55" filter="url(#gl3)"/><rect x="3.6" y="47" width="28.2" height="7.8" rx="1.500" fill="#e20a0a"/><text x="17.7" y="51.8" font-size="2.300" font-family="'Liberation Sans',sans-serif" font-weight="bold" fill="#3a0505" text-anchor="middle" textLength="20.2" lengthAdjust="spacingAndGlyphs">28 жовтня 1944 року</text><text x="34" y="19.3" font-size="2.400" font-family="'Liberation Sans',sans-serif" fill="#2b231d" stroke="#2b231d" stroke-width="0.120" textLength="77" lengthAdjust="spacingAndGlyphs">Друга світова розпочалася для України нападом нацистської</text><text x="34" y="22.4" font-size="2.400" font-family="'Liberation Sans',sans-serif" fill="#2b231d" stroke="#2b231d" stroke-width="0.120" textLength="77" lengthAdjust="spacingAndGlyphs">Німеччини на Польщу і бомбардуванням літаками люфтваффе</text><text x="34" y="25.5" font-size="2.400" font-family="'Liberation Sans',sans-serif" fill="#2b231d" stroke="#2b231d" stroke-width="0.120" textLength="52" lengthAdjust="spacingAndGlyphs">Львова. Перші дні війни забрали тисячі життів.</text><text x="34" y="30.6" font-size="2.400" font-family="'Liberation Sans',sans-serif" fill="#2b231d" stroke="#2b231d" stroke-width="0.120" textLength="77" lengthAdjust="spacingAndGlyphs">22 червня 1941 року Німеччина напала на СРСР. «Барбаросса» —</text><text x="34" y="33.7" font-size="2.400" font-family="'Liberation Sans',sans-serif" fill="#2b231d" stroke="#2b231d" stroke-width="0.120" textLength="77" lengthAdjust="spacingAndGlyphs">військова операція проти СРСР. Бої на українській землі</text><text x="34" y="36.8" font-size="2.400" font-family="'Liberation Sans',sans-serif" fill="#2b231d" stroke="#2b231d" stroke-width="0.120" textLength="77" lengthAdjust="spacingAndGlyphs">тривали до 28 жовтня 1944 року, коли звільнили Закарпаття</text><text x="34" y="39.9" font-size="2.400" font-family="'Liberation Sans',sans-serif" fill="#2b231d" stroke="#2b231d" stroke-width="0.120" textLength="34" lengthAdjust="spacingAndGlyphs">останнє селище України.</text><text x="34" y="49.0" font-size="2.400" font-family="'Liberation Sans',sans-serif" fill="#2b231d" stroke="#2b231d" stroke-width="0.120" textLength="77" lengthAdjust="spacingAndGlyphs">Понад 8 мільйонів українців загинули. Українці воювали в арміях</text><text x="34" y="52.1" font-size="2.400" font-family="'Liberation Sans',sans-serif" fill="#2b231d" stroke="#2b231d" stroke-width="0.120" textLength="52" lengthAdjust="spacingAndGlyphs">антигітлерівської коаліції та у русі Опору.</text></svg>
<svg class="abs" viewBox="0 0 116 65" width="116" height="64.600" preserveAspectRatio="none" style="left:398.6px;top:391.3px"><defs><filter id="gl4" x="-30%" y="-60%" width="160%" height="220%"><feGaussianBlur stdDeviation="0.9"/></filter></defs><rect width="116" height="65" rx="1.800" fill="#ebdec4"/><rect x="4.600" y="0" width="1.900" height="65" fill="#6b4a40"/><text x="58" y="5.800" font-size="2.900" font-family="'Liberation Sans',sans-serif" font-weight="bold" fill="#2a211c" stroke="#2a211c" stroke-width="0.180" text-anchor="middle" textLength="56" lengthAdjust="spacingAndGlyphs">Вигнання нацистських окупантів</text><rect x="2.8" y="11.399999999999999" width="30.200000000000003" height="9.6" rx="2" fill="#ff2a1a" opacity="0.55" filter="url(#gl4)"/><rect x="3.6" y="12.2" width="28.6" height="8" rx="1.500" fill="#e20a0a"/><text x="17.900000000000002" y="17.099999999999998" font-size="2.300" font-family="'Liberation Sans',sans-serif" font-weight="bold" fill="#3a0505" text-anchor="middle" textLength="20.6" lengthAdjust="spacingAndGlyphs">Бої за Донбас 1943</text><rect x="2.8" y="24.2" width="30.200000000000003" height="9.0" rx="2" fill="#ff2a1a" opacity="0.55" filter="url(#gl4)"/><rect x="3.6" y="25" width="28.6" height="7.4" rx="1.500" fill="#e20a0a"/><text x="17.900000000000002" y="29.599999999999998" font-size="2.300" font-family="'Liberation Sans',sans-serif" font-weight="bold" fill="#3a0505" text-anchor="middle" textLength="20.6" lengthAdjust="spacingAndGlyphs">Битва за Дніпро</text><rect x="2.8" y="35.0" width="30.200000000000003" height="9.6" rx="2" fill="#ff2a1a" opacity="0.55" filter="url(#gl4)"/><rect x="3.6" y="35.8" width="28.6" height="8" rx="1.500" fill="#e20a0a"/><text x="17.900000000000002" y="40.699999999999996" font-size="2.300" font-family="'Liberation Sans',sans-serif" font-weight="bold" fill="#3a0505" text-anchor="middle" textLength="20.6" lengthAdjust="spacingAndGlyphs">Жовтень 1944 року</text><text x="34.500" y="15.4" font-size="2.400" font-family="'Liberation Sans',sans-serif" fill="#2b231d" stroke="#2b231d" stroke-width="0.120" textLength="77" lengthAdjust="spacingAndGlyphs">Вигнання ворожих військ почалося з Луганщини. Червона армія</text><text x="34.500" y="18.7" font-size="2.400" font-family="'Liberation Sans',sans-serif" fill="#2b231d" stroke="#2b231d" stroke-width="0.120" textLength="77" lengthAdjust="spacingAndGlyphs">провела наступальні операції: Білгородсько-Харківську,</text><text x="34.500" y="22.0" font-size="2.400" font-family="'Liberation Sans',sans-serif" fill="#2b231d" stroke="#2b231d" stroke-width="0.120" textLength="62" lengthAdjust="spacingAndGlyphs">Донбаську, Запорізьку, Київську й вийшла до Дніпра.</text><text x="35.500" y="31.200" font-size="2.400" font-family="'Liberation Sans',sans-serif" fill="#2b231d" stroke="#2b231d" stroke-width="0.120" textLength="52" lengthAdjust="spacingAndGlyphs">Після звільнення Києва відкрився фронт. Бої на Правобережжі</text><text x="34.500" y="41.5" font-size="2.400" font-family="'Liberation Sans',sans-serif" fill="#2b231d" stroke="#2b231d" stroke-width="0.120" textLength="77" lengthAdjust="spacingAndGlyphs">нацистів остаточно вигнали з України. Бойові дії перейшли на землі ще до</text><text x="34.500" y="44.8" font-size="2.400" font-family="'Liberation Sans',sans-serif" fill="#2b231d" stroke="#2b231d" stroke-width="0.120" textLength="8" lengthAdjust="spacingAndGlyphs">Європи.</text></svg>
<svg class="abs" viewBox="0 0 116 65" width="116" height="64.600" preserveAspectRatio="none" style="left:529.5px;top:391.3px"><rect width="116" height="65" rx="1.800" fill="#ebdec4"/><rect x="4.600" y="0" width="1.900" height="65" fill="#6b4a40"/><text x="60" y="5.600" font-size="2.900" font-family="'Liberation Sans',sans-serif" font-weight="bold" fill="#2a211c" stroke="#2a211c" stroke-width="0.180" text-anchor="middle" textLength="52" lengthAdjust="spacingAndGlyphs">Українці у Другій світовій війні</text><g transform="translate(0,1.300)"><rect x="12" y="9.200" width="11.500" height="6.600" fill="#d4201c"/><path d="M16.500,11.200 l0.500,1.300 l1.400,0 l-1.100,0.800 l0.400,1.300 l-1.200,-0.800 l-1.200,0.800 l0.400,-1.300 l-1.100,-0.800 l1.400,0z" fill="#f0c020"/><text x="26.2" y="15.2" font-size="9.800" font-family="'Liberation Sans',sans-serif" font-weight="bold" fill="#474c41" textLength="5.5" lengthAdjust="spacingAndGlyphs">7</text><text x="32.3" y="15.2" font-size="2.700" font-family="'Liberation Sans',sans-serif" font-weight="bold" fill="#474c41">млн</text><text x="26.2" y="18.4" font-size="2.100" font-family="'Liberation Sans',sans-serif" fill="#3a3a32" stroke="#3a3a32" stroke-width="0.100">у Червоній армії</text><text x="26.2" y="20.6" font-size="2.100" font-family="'Liberation Sans',sans-serif" fill="#3a3a32" stroke="#3a3a32" stroke-width="0.100">загинуло 3-4 млн</text><rect x="56.500" y="9.200" width="11.500" height="3.300" fill="#c8201c"/><rect x="56.500" y="12.500" width="11.500" height="3.300" fill="#141414"/><text x="69.500" y="13.200" font-size="1.900" font-family="'Liberation Sans',sans-serif" fill="#4a4a42">близько</text><text x="81.6" y="15.2" font-size="9.800" font-family="'Liberation Sans',sans-serif" font-weight="bold" fill="#474c41" textLength="15" lengthAdjust="spacingAndGlyphs">100</text><text x="97.19999999999999" y="15.2" font-size="2.700" font-family="'Liberation Sans',sans-serif" font-weight="bold" fill="#474c41">тис.</text><text x="81.6" y="18.4" font-size="2.100" font-family="'Liberation Sans',sans-serif" fill="#3a3a32" stroke="#3a3a32" stroke-width="0.100">українській</text><text x="81.6" y="20.6" font-size="2.100" font-family="'Liberation Sans',sans-serif" fill="#3a3a32" stroke="#3a3a32" stroke-width="0.100">повстанській армії</text><rect x="18.300" y="23.400" width="4.100" height="6.700" fill="#1f3f9a"/><rect x="22.400" y="23.400" width="4.100" height="6.700" fill="#f4f4f4"/><rect x="26.500" y="23.400" width="4.100" height="6.700" fill="#e2282c"/><text x="32.8" y="30.4" font-size="9.800" font-family="'Liberation Sans',sans-serif" font-weight="bold" fill="#474c41" textLength="5.5" lengthAdjust="spacingAndGlyphs">6</text><text x="38.9" y="30.4" font-size="2.700" font-family="'Liberation Sans',sans-serif" font-weight="bold" fill="#474c41">тис.</text><text x="32.8" y="33.6" font-size="2.100" font-family="'Liberation Sans',sans-serif" fill="#3a3a32" stroke="#3a3a32" stroke-width="0.100">у французькій</text><text x="32.8" y="35.8" font-size="2.100" font-family="'Liberation Sans',sans-serif" fill="#3a3a32" stroke="#3a3a32" stroke-width="0.100">армії</text><rect x="62.500" y="23.400" width="12" height="3.400" fill="#f6f6f6"/><rect x="62.500" y="26.800" width="12" height="3.400" fill="#dc2038"/><text x="76.6" y="30.4" font-size="9.800" font-family="'Liberation Sans',sans-serif" font-weight="bold" fill="#474c41" textLength="15.5" lengthAdjust="spacingAndGlyphs">120</text><text x="92.69999999999999" y="30.4" font-size="2.700" font-family="'Liberation Sans',sans-serif" font-weight="bold" fill="#474c41">тис.</text><text x="76.6" y="33.6" font-size="2.100" font-family="'Liberation Sans',sans-serif" fill="#3a3a32" stroke="#3a3a32" stroke-width="0.100">у польській</text><text x="76.6" y="35.8" font-size="2.100" font-family="'Liberation Sans',sans-serif" fill="#3a3a32" stroke="#3a3a32" stroke-width="0.100">армії 1939</text><rect x="25.200" y="38.600" width="11.800" height="6.800" fill="#eceaea"/><g fill="#c43040"><rect x="25.200" y="38.600" width="11.800" height="0.900"/><rect x="25.200" y="40.400" width="11.800" height="0.900"/><rect x="25.200" y="42.200" width="11.800" height="0.900"/><rect x="25.200" y="44" width="11.800" height="0.900"/></g><rect x="25.200" y="38.600" width="5" height="3.600" fill="#2c3c8a"/><text x="40" y="45.6" font-size="9.800" font-family="'Liberation Sans',sans-serif" font-weight="bold" fill="#474c41" textLength="10.5" lengthAdjust="spacingAndGlyphs">80</text><text x="51.1" y="45.6" font-size="2.700" font-family="'Liberation Sans',sans-serif" font-weight="bold" fill="#474c41">тис.</text><text x="40" y="48.800000000000004" font-size="2.100" font-family="'Liberation Sans',sans-serif" fill="#3a3a32" stroke="#3a3a32" stroke-width="0.100">в армії США</text><text x="40" y="51.0" font-size="2.100" font-family="'Liberation Sans',sans-serif" fill="#3a3a32" stroke="#3a3a32" stroke-width="0.100">і Канади</text><rect x="69.200" y="38.600" width="12.200" height="6.800" fill="#27357e"/><path d="M69.200,38.600 l12.200,6.800 M81.400,38.600 l-12.200,6.800" stroke="#fff" stroke-width="1.500"/><path d="M69.200,38.600 l12.200,6.800 M81.400,38.600 l-12.200,6.800" stroke="#c8202c" stroke-width="0.600"/><path d="M75.300,38.600 v6.800 M69.200,42 h12.200" stroke="#fff" stroke-width="2.200"/><path d="M75.300,38.600 v6.800 M69.200,42 h12.200" stroke="#c8202c" stroke-width="1.200"/><text x="83" y="45.6" font-size="9.800" font-family="'Liberation Sans',sans-serif" font-weight="bold" fill="#474c41" textLength="10.5" lengthAdjust="spacingAndGlyphs">45</text><text x="94.1" y="45.6" font-size="2.700" font-family="'Liberation Sans',sans-serif" font-weight="bold" fill="#474c41">тис.</text><text x="83" y="48.800000000000004" font-size="2.100" font-family="'Liberation Sans',sans-serif" fill="#3a3a32" stroke="#3a3a32" stroke-width="0.100">в британській</text><text x="83" y="51.0" font-size="2.100" font-family="'Liberation Sans',sans-serif" fill="#3a3a32" stroke="#3a3a32" stroke-width="0.100">армії</text><circle cx="15.300" cy="55.800" r="2.100" fill="#b0141a"/><circle cx="15.300" cy="55.800" r="0.700" fill="#2a0a0a"/><circle cx="26.700" cy="60.400" r="2.100" fill="#b0141a"/><circle cx="26.700" cy="60.400" r="0.700" fill="#2a0a0a"/><text x="19" y="56.500" font-size="1.800" font-family="'Liberation Sans',sans-serif" fill="#2b231d" textLength="66" lengthAdjust="spacingAndGlyphs">мільйонів українців воювали у складі різних армій проти нацизму</text><text x="30" y="61.100" font-size="1.800" font-family="'Liberation Sans',sans-serif" fill="#2b231d" textLength="62" lengthAdjust="spacingAndGlyphs">кожен п’ятий українець загинув у роки Другої світової війни</text></g></svg>
<svg class="abs" viewBox="0 0 116 65" width="116" height="64.600" preserveAspectRatio="none" style="left:660.1px;top:391.3px"><defs><filter id="gl6" x="-10%" y="-30%" width="120%" height="160%"><feGaussianBlur stdDeviation="0.7"/></filter><filter id="bd6"><feGaussianBlur stdDeviation="0.35"/></filter></defs><rect width="116" height="65" rx="1.800" fill="#ebdec4"/><rect x="4.600" y="0" width="1.900" height="65" fill="#6b4a40"/><text x="60" y="6.600" font-size="2.700" font-family="'Liberation Sans',sans-serif" font-weight="bold" fill="#2a211c" stroke="#2a211c" stroke-width="0.180" text-anchor="middle" textLength="90" lengthAdjust="spacingAndGlyphs">Кому належить визначна роль у перемозі над нацизмом?</text><text x="60" y="14" font-size="2.500" font-family="'Liberation Sans',sans-serif" font-weight="bold" fill="#d81e2c" stroke="#d81e2c" stroke-width="0.150" text-anchor="middle" textLength="100" lengthAdjust="spacingAndGlyphs">Жодна країна не може претендувати на визначну роль у перемозі над нацизмом.</text><text x="60" y="17.600" font-size="2.500" font-family="'Liberation Sans',sans-serif" font-weight="bold" fill="#d81e2c" stroke="#d81e2c" stroke-width="0.150" text-anchor="middle" textLength="92" lengthAdjust="spacingAndGlyphs">Перемога – результат титанічних зусиль десятків держав і сотень народів.</text><rect x="2.600" y="21" width="110.500" height="11.800" rx="3" fill="#f0a060" opacity="0.8" filter="url(#gl6)"/><rect x="3.300" y="21.600" width="109" height="10.600" rx="2.800" fill="#fdf6ef" stroke="#f2b48c" stroke-width="0.400"/><text x="58" y="26" font-size="3.300" font-family="'Liberation Serif',serif" fill="#3a3029" text-anchor="middle" textLength="84" lengthAdjust="spacingAndGlyphs">Попереджаємо: спроби привласнення перемоги,</text><text x="58" y="30.300" font-size="3.300" font-family="'Liberation Serif',serif" fill="#3a3029" text-anchor="middle" textLength="92" lengthAdjust="spacingAndGlyphs">заперечення перемоги у Другій світовій унеможливлюємо</text><path d="M57.800,33.800 v3 h-1.300 l1.900,2.200 l1.900,-2.200 h-1.300 v-3z" fill="#c8181c"/><text x="39.500" y="42.6" font-size="2.900" font-family="'Liberation Sans',sans-serif" font-weight="bold" fill="#1e1713" text-anchor="middle" textLength="56" lengthAdjust="spacingAndGlyphs">Бюлетень про війну має поставати до пульсу</text><text x="39.500" y="46.3" font-size="2.900" font-family="'Liberation Sans',sans-serif" font-weight="bold" fill="#1e1713" text-anchor="middle" textLength="62" lengthAdjust="spacingAndGlyphs">перемоги, а розвивати пам’ять загиблих мир,</text><text x="39.500" y="50.0" font-size="2.900" font-family="'Liberation Sans',sans-serif" font-weight="bold" fill="#1e1713" text-anchor="middle" textLength="60" lengthAdjust="spacingAndGlyphs">консолідації і безкомпромісне знайомство на</text><text x="39.500" y="53.7" font-size="2.900" font-family="'Liberation Sans',sans-serif" font-weight="bold" fill="#1e1713" text-anchor="middle" textLength="64" lengthAdjust="spacingAndGlyphs">нових розуміннях засобами, а також вшанувати</text><text x="39.500" y="57.4" font-size="2.900" font-family="'Liberation Sans',sans-serif" font-weight="bold" fill="#1e1713" text-anchor="middle" textLength="66" lengthAdjust="spacingAndGlyphs">пам’ятність та причетність у боротьбі з ворогом</text><g filter="url(#bd6)"><path d="M75,43.500 q5,-2.500 10,2.500 q-6,0.500 -10,-2.500z M77,47.500 q4,-2 8,-1.500 q-4,2.500 -8,1.500z" fill="#6a9a4a"/><path d="M89,46 Q82,40 82,32.500 Q88,34 92,40 Q94,43 95,46 Q97,38 104,33.500 Q110,31 108.500,36 Q107,45 100,51 Z" fill="#f4f2f0"/><path d="M96,46 Q99,38 105,34 Q109,32.500 108,36 Q106,43 100,49z" fill="#dddbd9"/><ellipse cx="94" cy="52" rx="7.500" ry="5" transform="rotate(38 94 52)" fill="#f1efed"/><circle cx="87" cy="46.300" r="2.600" fill="#f4f2f0"/><path d="M97,55 Q103,58 107,63.500 Q102,65 98,62.500 Q95,59 97,55z" fill="#e6e4e2"/></g></svg>
<svg class="abs" viewBox="0 0 66.9 65" width="66.9" height="64.600" preserveAspectRatio="none" style="left:790.8px;top:391.3px"><defs><filter id="bd7"><feGaussianBlur stdDeviation="0.5"/></filter></defs><rect width="116" height="65" rx="1.800" fill="#ebdec4"/><rect x="4.600" y="0" width="1.900" height="65" fill="#6b4a40"/><text x="32" y="6.200" font-size="2.900" font-family="'Liberation Sans',sans-serif" font-weight="bold" fill="#2a211c" textLength="40" lengthAdjust="spacingAndGlyphs">Цвіт, що говорить пам’ять</text><g filter="url(#bd7)"><path d="M18,30 q4,14 8,34 M26,40 q-4,10 -4,24 M36,44 q-6,8 -8,20" stroke="#4f8a3a" stroke-width="0.900" fill="none"/><path d="M16,56 q6,-4 10,2 q4,-6 10,-6 q-2,6 -8,8 q4,2 4,5 q-8,0 -10,-4 q-4,2 -8,2 q0,-4 2,-7z" fill="#4f9a3c"/><ellipse cx="7.500" cy="33" rx="1.600" ry="2.800" fill="#8aa04a"/><ellipse cx="41" cy="50" rx="1.600" ry="2.600" fill="#8aa04a"/><path d="M10,14 q6,-5 12,-2 q8,-2 10,4 q0,8 -6,10 q-8,2 -12,-2 q-6,-4 -4,-10z" fill="#e8382c"/><path d="M8,34 q4,-8 14,-6 q8,2 8,10 q2,6 -4,10 q-8,4 -16,0 q-6,-6 -2,-14z" fill="#e03028"/><path d="M34,28 q4,-6 10,-2 q6,6 4,14 q-4,6 -10,2 q-6,-6 -4,-14z" fill="#ea4030"/><ellipse cx="19" cy="40" rx="2.600" ry="2" fill="#3a1410"/><ellipse cx="20" cy="18" rx="4" ry="2" fill="#c02820" opacity="0.7"/></g><text x="51.500" y="16.3" font-size="2.400" font-family="'Liberation Sans',sans-serif" fill="#2b231d" stroke="#2b231d" stroke-width="0.120" textLength="18.4" lengthAdjust="spacingAndGlyphs">Символом пам’яті</text><text x="51.500" y="19.85" font-size="2.400" font-family="'Liberation Sans',sans-serif" fill="#2b231d" stroke="#2b231d" stroke-width="0.120" textLength="22" lengthAdjust="spacingAndGlyphs">Зі Заходом в Україну</text><text x="51.500" y="23.4" font-size="2.400" font-family="'Liberation Sans',sans-serif" fill="#2b231d" stroke="#2b231d" stroke-width="0.120" textLength="18.4" lengthAdjust="spacingAndGlyphs">шанобливо у 2014</text><text x="51.500" y="26.95" font-size="2.400" font-family="'Liberation Sans',sans-serif" fill="#2b231d" stroke="#2b231d" stroke-width="0.120" textLength="22" lengthAdjust="spacingAndGlyphs">В Україні до традицій</text><text x="51.500" y="30.5" font-size="2.400" font-family="'Liberation Sans',sans-serif" fill="#2b231d" stroke="#2b231d" stroke-width="0.120" textLength="22" lengthAdjust="spacingAndGlyphs">Вшанування це квітка</text><text x="51.500" y="34.05" font-size="2.400" font-family="'Liberation Sans',sans-serif" fill="#2b231d" stroke="#2b231d" stroke-width="0.120" textLength="22" lengthAdjust="spacingAndGlyphs">поминання про полеглих</text><text x="51.500" y="37.6" font-size="2.400" font-family="'Liberation Sans',sans-serif" fill="#2b231d" stroke="#2b231d" stroke-width="0.120" textLength="17.25" lengthAdjust="spacingAndGlyphs">пам’ятати всіх.</text><text x="51.500" y="44.7" font-size="2.400" font-family="'Liberation Sans',sans-serif" fill="#2b231d" stroke="#2b231d" stroke-width="0.120" textLength="18.4" lengthAdjust="spacingAndGlyphs">Мак — це символ,</text><text x="51.500" y="48.25" font-size="2.400" font-family="'Liberation Sans',sans-serif" fill="#2b231d" stroke="#2b231d" stroke-width="0.120" textLength="22" lengthAdjust="spacingAndGlyphs">Що нагадує про життя</text><text x="51.500" y="51.8" font-size="2.400" font-family="'Liberation Sans',sans-serif" fill="#2b231d" stroke="#2b231d" stroke-width="0.120" textLength="17.25" lengthAdjust="spacingAndGlyphs">як про памʼять.</text></svg>
<div class="abs tn" style="left:11.1px;top:457.3px;color:#d4611f">1</div>
<div class="abs tn" style="left:140.1px;top:457.3px;color:#c4c4c4">2</div>
<div class="abs tn" style="left:270.9px;top:457.3px;color:#c4c4c4">3</div>
<div class="abs tn" style="left:401.4px;top:457.3px;color:#c4c4c4">4</div>
<div class="abs tn" style="left:532.2px;top:457.3px;color:#c4c4c4">5</div>
<div class="abs tn" style="left:662.9px;top:457.3px;color:#c4c4c4">6</div>
<div class="abs tn" style="left:793.5px;top:457.3px;color:#c4c4c4">7</div>
<div class="abs" style="left:1.1px;top:477.0px;width:159.500px;height:3.200px;border-radius:1.600px;background:#6c6c6c"></div>
</div>
<div id="right" class="abs">
<div class="abs" style="left:0;top:2.500px;width:1px;height:484px;background:#fdfdfd"></div>
<div class="tile" style="left:2.2999999999999545px;top:19.299999999999997px;width:77.7px;height:57.4px;background:linear-gradient(120deg,#f4e9ee 0%,#f5eff0 45%,#eff3ee 100%)"><div class="av" style="left:22.8px;top:12.400000000000002px;width:32.4px;height:32.4px"><svg viewBox="0 0 32 32" width="32.400" height="32.400"><defs><filter id="b1a"><feGaussianBlur stdDeviation="0.45"/></filter></defs><rect width="32" height="32" fill="#4a4332"/><g filter="url(#b1a)"><path d="M0,0 h14 l-4,8 l-10,6z" fill="#8a7a5c"/><path d="M14,0 h18 v8 l-8,4 l-8,-4z" fill="#6b5c45"/><path d="M3,10 l12,-5 l10,5 l3,12 l-8,8 l-14,-2 l-4,-8z" fill="#23231c"/><path d="M17,7 l8,2 l3,8 l-5,-1 l-2,-5z" fill="#c4b090"/><path d="M8,12 l8,-3 l2,6 l-7,4z" fill="#3a3a2c"/><path d="M14,15 l3.500,-1 l1.500,3 l-3.500,1.500z" fill="#2f7a40"/><path d="M20,14 l4,1 l4,14 l-3,1 l-5,-12z" fill="#1a1a15"/><path d="M0,20 l8,2 l10,8 l-2,2 l-16,0z" fill="#6a5e48"/><path d="M18,24 l8,-4 l6,2 v10 h-12z" fill="#b8a484"/><path d="M4,24 l12,3 l-1,3 l-12,-2z" fill="#2a2a20"/></g></svg></div><div class="badge" style="left:3px;top:39.1px"><svg viewBox="0 0 20 20" width="12" height="12"><g fill="none" stroke="#fff" stroke-width="1.3" stroke-linecap="round"><rect x="7.500" y="3" width="5" height="9" rx="2.500"/><path d="M5,10 a5,5 0 0 0 10,0 M10,15 v2.500 M4,3.500 L16,17"/></g></svg></div></div>
<div class="tile" style="left:82.39999999999998px;top:19.299999999999997px;width:77.7px;height:57.4px;background:linear-gradient(120deg,#f0eaf3 0%,#f4ecf0 50%,#f6eaee 100%)"><div class="av" style="left:23.000000000000004px;top:12.5px;width:32.4px;height:32.4px"><svg viewBox="0 0 32 32" width="32" height="32"><rect width="32" height="32" fill="#e9e2d6"/><ellipse cx="16" cy="15" rx="12" ry="11" fill="#e6b9a4"/><path d="M3,12 q2,-10 13,-10 q12,0 13,10 q-6,-5 -13,-4 q-8,0 -13,4z" fill="#b59a6a"/><path d="M0,26 q6,-4 10,-3 q6,4 12,0 q6,-1 10,3 v6 h-32z" fill="#17130f"/><path d="M9,14 h4 M19,14 h4" stroke="#5b3a2c" stroke-width="1.200"/><path d="M13,21 q3,1.500 6,0" stroke="#b0604f" stroke-width="1" fill="none"/></svg></div><div class="badge" style="left:3px;top:39.1px"><svg viewBox="0 0 20 20" width="12" height="12"><g fill="none" stroke="#fff" stroke-width="1.3" stroke-linecap="round"><rect x="7.500" y="3" width="5" height="9" rx="2.500"/><path d="M5,10 a5,5 0 0 0 10,0 M10,15 v2.500 M4,3.500 L16,17"/></g></svg></div></div>
<div class="tile" style="left:2.2999999999999545px;top:78.9px;width:77.7px;height:57.4px;background:#7a3a24"><svg viewBox="0 0 78 58" width="78" height="58" preserveAspectRatio="none" style="position:absolute;left:0;top:0"><defs><filter id="b1"><feGaussianBlur stdDeviation="0.55"/></filter><linearGradient id="sk1" x1="0" y1="0" x2="0" y2="1"><stop offset="0" stop-color="#e8e6e4"/><stop offset="0.24" stop-color="#dcd8d3"/><stop offset="0.31" stop-color="#7a6a3c"/><stop offset="1" stop-color="#5e4a28"/></linearGradient></defs><rect width="78" height="58" fill="url(#sk1)"/><g filter="url(#b1)"><rect x="8.3" y="17.6" width="1.9" height="3.5" fill="#6a7a3a"/><rect x="11.4" y="23.8" width="1.3" height="4.5" fill="#5a6a34"/><rect x="72.3" y="20.0" width="1.1" height="4.9" fill="#6a7a3a"/><rect x="6.1" y="20.1" width="1.6" height="3.3" fill="#5a6a34"/><rect x="33.5" y="41.2" width="1.0" height="4.1" fill="#3e4e24"/><rect x="14.1" y="35.1" width="2.2" height="3.2" fill="#3e4e24"/><rect x="47.2" y="20.0" width="2.3" height="3.0" fill="#4a5a2a"/><rect x="62.5" y="45.6" width="2.4" height="3.9" fill="#6a7a3a"/><rect x="44.4" y="24.0" width="1.9" height="3.0" fill="#5a6a34"/><rect x="21.8" y="20.9" width="2.2" height="2.5" fill="#6a7a3a"/><rect x="10.4" y="29.9" width="1.9" height="3.1" fill="#6a7a3a"/><rect x="59.7" y="33.0" width="2.2" height="2.2" fill="#5a6a34"/><rect x="23.5" y="20.2" width="2.4" height="5.0" fill="#4a5a2a"/><rect x="18.1" y="55.7" width="2.1" height="3.0" fill="#6a7a3a"/><rect x="44.4" y="38.4" width="1.6" height="5.0" fill="#3e4e24"/><rect x="54.7" y="48.0" width="2.6" height="2.1" fill="#4a5a2a"/><rect x="57.6" y="26.8" width="1.6" height="2.2" fill="#3e4e24"/><rect x="50.5" y="16.5" width="1.4" height="2.8" fill="#5a6a34"/><rect x="42.9" y="37.3" width="2.5" height="3.7" fill="#4a5a2a"/><rect x="49.8" y="50.0" width="1.1" height="3.8" fill="#4a5a2a"/><rect x="30.1" y="55.4" width="1.6" height="4.9" fill="#6a7a3a"/><rect x="42.3" y="41.1" width="1.7" height="3.5" fill="#5a6a34"/><rect x="41.1" y="41.1" width="1.6" height="2.9" fill="#5a6a34"/><rect x="43.7" y="27.9" width="2.1" height="2.9" fill="#4a5a2a"/><rect x="60.3" y="40.6" width="2.0" height="3.2" fill="#6a7a3a"/><rect x="4.1" y="29.2" width="1.6" height="3.7" fill="#5a6a34"/><rect x="5.7" y="54.0" width="1.7" height="3.4" fill="#3e4e24"/><rect x="3.5" y="20.1" width="2.3" height="4.7" fill="#3e4e24"/><rect x="76.3" y="50.3" width="2.0" height="2.3" fill="#6a7a3a"/><rect x="35.5" y="24.6" width="1.1" height="3.6" fill="#4a5a2a"/><rect x="28.3" y="21.9" width="1.7" height="3.8" fill="#6a7a3a"/><rect x="28.4" y="47.2" width="2.3" height="2.4" fill="#5a6a34"/><rect x="57.3" y="26.0" width="1.2" height="4.7" fill="#5a6a34"/><rect x="21.4" y="41.6" width="2.2" height="4.1" fill="#3e4e24"/><rect x="49.4" y="47.6" width="1.3" height="2.7" fill="#3e4e24"/><rect x="68.5" y="17.7" width="1.1" height="2.8" fill="#6a7a3a"/><rect x="2.1" y="17.6" width="1.4" height="2.8" fill="#4a5a2a"/><rect x="71.2" y="22.8" width="1.4" height="4.9" fill="#6a7a3a"/><rect x="37.3" y="24.8" width="1.5" height="4.2" fill="#4a5a2a"/><rect x="62.6" y="34.8" width="2.3" height="4.5" fill="#3e4e24"/><rect x="34.7" y="47.4" width="1.6" height="2.5" fill="#3e4e24"/><rect x="51.0" y="57.5" width="1.5" height="3.6" fill="#3e4e24"/><rect x="33.4" y="31.5" width="1.2" height="4.6" fill="#4a5a2a"/><rect x="42.4" y="34.1" width="1.9" height="4.4" fill="#6a7a3a"/><rect x="23.3" y="48.6" width="1.1" height="2.6" fill="#4a5a2a"/><rect x="54.2" y="36.8" width="2.2" height="3.0" fill="#3e4e24"/><rect x="17.1" y="43.6" width="1.5" height="4.7" fill="#5a6a34"/><rect x="55.3" y="39.9" width="2.5" height="4.8" fill="#5a6a34"/><rect x="34.2" y="49.7" width="1.5" height="3.0" fill="#6a7a3a"/><rect x="75.5" y="46.7" width="1.8" height="2.3" fill="#5a6a34"/><rect x="1.9" y="44.4" width="1.9" height="4.4" fill="#5a6a34"/><rect x="62.2" y="38.7" width="2.3" height="3.7" fill="#3e4e24"/><rect x="7.0" y="35.1" width="2.4" height="4.4" fill="#3e4e24"/><rect x="40.2" y="38.9" width="1.9" height="4.9" fill="#6a7a3a"/><rect x="5.0" y="39.0" width="2.3" height="2.3" fill="#4a5a2a"/><rect x="21.3" y="20.4" width="1.5" height="2.1" fill="#3e4e24"/><rect x="7.6" y="50.3" width="1.7" height="4.1" fill="#6a7a3a"/><rect x="59.7" y="37.9" width="2.2" height="3.2" fill="#5a6a34"/><rect x="63.0" y="30.0" width="1.2" height="3.5" fill="#4a5a2a"/><rect x="55.2" y="54.4" width="1.7" height="4.5" fill="#5a6a34"/><rect x="66.6" y="49.8" width="2.3" height="4.7" fill="#4a5a2a"/><rect x="40.9" y="45.8" width="2.3" height="3.3" fill="#6a7a3a"/><rect x="71.4" y="26.3" width="1.3" height="3.9" fill="#3e4e24"/><rect x="25.0" y="32.4" width="1.8" height="2.8" fill="#4a5a2a"/><rect x="36.8" y="46.7" width="1.5" height="2.5" fill="#3e4e24"/><rect x="71.2" y="47.6" width="1.0" height="3.4" fill="#4a5a2a"/><rect x="24.4" y="24.3" width="1.6" height="3.8" fill="#6a7a3a"/><rect x="46.4" y="25.4" width="1.3" height="2.8" fill="#3e4e24"/><rect x="71.0" y="55.4" width="2.0" height="4.8" fill="#6a7a3a"/><rect x="66.6" y="36.4" width="1.6" height="4.9" fill="#4a5a2a"/><ellipse cx="50.2" cy="14.0" rx="1.9" ry="1.4" fill="#d43a22"/><ellipse cx="61.9" cy="54.2" rx="3.0" ry="2.3" fill="#a82414"/><ellipse cx="16.4" cy="19.1" rx="1.9" ry="1.4" fill="#c8301c"/><ellipse cx="2.3" cy="40.1" rx="2.9" ry="2.2" fill="#d43a22"/><ellipse cx="21.3" cy="35.4" rx="2.6" ry="1.9" fill="#c8301c"/><ellipse cx="77.9" cy="16.4" rx="2.2" ry="1.6" fill="#a82414"/><ellipse cx="74.7" cy="18.1" rx="2.6" ry="2.0" fill="#a82414"/><ellipse cx="13.7" cy="29.6" rx="2.7" ry="2.0" fill="#d43a22"/><ellipse cx="15.7" cy="41.3" rx="3.7" ry="2.8" fill="#c8301c"/><ellipse cx="5.4" cy="31.5" rx="2.1" ry="1.6" fill="#c8301c"/><ellipse cx="60.7" cy="21.8" rx="1.6" ry="1.2" fill="#d43a22"/><ellipse cx="19.8" cy="19.8" rx="2.2" ry="1.7" fill="#c8301c"/><ellipse cx="49.4" cy="50.1" rx="3.6" ry="2.7" fill="#d84428"/><ellipse cx="51.1" cy="49.3" rx="4.5" ry="3.3" fill="#a82414"/><ellipse cx="34.4" cy="50.7" rx="2.2" ry="1.7" fill="#d84428"/><ellipse cx="77.7" cy="18.4" rx="2.3" ry="1.7" fill="#c8301c"/><ellipse cx="9.5" cy="17.2" rx="1.6" ry="1.2" fill="#d84428"/><ellipse cx="10.3" cy="17.0" rx="1.9" ry="1.4" fill="#c02c1a"/><ellipse cx="36.7" cy="58.0" rx="4.7" ry="3.5" fill="#d84428"/><ellipse cx="0.4" cy="13.8" rx="2.2" ry="1.7" fill="#c02c1a"/><ellipse cx="10.1" cy="48.1" rx="2.0" ry="1.5" fill="#d43a22"/><ellipse cx="76.5" cy="16.6" rx="1.4" ry="1.0" fill="#a82414"/><ellipse cx="39.0" cy="57.9" rx="2.6" ry="2.0" fill="#a82414"/><ellipse cx="11.2" cy="40.5" rx="3.0" ry="2.3" fill="#b82818"/><ellipse cx="17.7" cy="48.0" rx="3.3" ry="2.5" fill="#d84428"/><ellipse cx="16.7" cy="21.3" rx="1.5" ry="1.1" fill="#c02c1a"/><ellipse cx="54.7" cy="56.3" rx="2.2" ry="1.6" fill="#a82414"/><ellipse cx="23.7" cy="13.8" rx="2.5" ry="1.9" fill="#a82414"/><ellipse cx="9.0" cy="35.8" rx="3.4" ry="2.5" fill="#d84428"/><ellipse cx="15.3" cy="55.8" rx="4.6" ry="3.4" fill="#d84428"/><ellipse cx="13.7" cy="45.4" rx="2.1" ry="1.5" fill="#d43a22"/><ellipse cx="55.5" cy="55.8" rx="2.9" ry="2.2" fill="#d43a22"/><ellipse cx="51.2" cy="44.1" rx="3.3" ry="2.5" fill="#d43a22"/><ellipse cx="41.9" cy="48.6" rx="2.8" ry="2.1" fill="#a82414"/><ellipse cx="65.7" cy="17.7" rx="2.4" ry="1.8" fill="#c02c1a"/><ellipse cx="37.4" cy="42.4" rx="3.3" ry="2.5" fill="#c8301c"/><ellipse cx="23.7" cy="21.0" rx="1.7" ry="1.3" fill="#c02c1a"/><ellipse cx="65.5" cy="44.0" rx="4.2" ry="3.1" fill="#c02c1a"/><ellipse cx="64.9" cy="14.2" rx="1.8" ry="1.4" fill="#a82414"/><ellipse cx="40.2" cy="31.0" rx="3.2" ry="2.4" fill="#d84428"/><ellipse cx="27.7" cy="40.9" rx="2.0" ry="1.5" fill="#a82414"/><ellipse cx="49.5" cy="18.4" rx="2.0" ry="1.5" fill="#c02c1a"/><ellipse cx="77.2" cy="14.9" rx="1.6" ry="1.2" fill="#d84428"/><ellipse cx="60.0" cy="25.0" rx="2.9" ry="2.2" fill="#c8301c"/><ellipse cx="45.2" cy="44.0" rx="3.7" ry="2.8" fill="#c02c1a"/><ellipse cx="24.3" cy="30.2" rx="3.3" ry="2.5" fill="#d84428"/><ellipse cx="8.8" cy="34.2" rx="3.7" ry="2.7" fill="#c02c1a"/><ellipse cx="39.2" cy="40.2" rx="1.8" ry="1.4" fill="#c8301c"/><ellipse cx="13.5" cy="28.1" rx="3.1" ry="2.3" fill="#d43a22"/><ellipse cx="29.8" cy="36.4" rx="3.2" ry="2.4" fill="#a82414"/><ellipse cx="1.5" cy="19.1" rx="2.1" ry="1.6" fill="#c8301c"/><ellipse cx="37.1" cy="18.5" rx="1.6" ry="1.2" fill="#c02c1a"/><ellipse cx="30.1" cy="21.6" rx="2.9" ry="2.2" fill="#c8301c"/><ellipse cx="15.7" cy="43.7" rx="4.1" ry="3.1" fill="#b82818"/><ellipse cx="49.9" cy="57.7" rx="4.6" ry="3.5" fill="#a82414"/><ellipse cx="18.1" cy="46.3" rx="3.9" ry="3.0" fill="#d43a22"/><ellipse cx="51.0" cy="18.5" rx="1.6" ry="1.2" fill="#c8301c"/><ellipse cx="46.0" cy="54.6" rx="3.4" ry="2.5" fill="#b82818"/><ellipse cx="45.4" cy="51.3" rx="3.7" ry="2.8" fill="#a82414"/><ellipse cx="0.8" cy="34.2" rx="3.2" ry="2.4" fill="#d43a22"/><ellipse cx="36.2" cy="42.3" rx="2.3" ry="1.7" fill="#a82414"/><ellipse cx="67.4" cy="38.8" rx="3.2" ry="2.4" fill="#c02c1a"/><ellipse cx="12.1" cy="13.5" rx="1.7" ry="1.2" fill="#a82414"/><ellipse cx="21.9" cy="54.3" rx="2.6" ry="2.0" fill="#c8301c"/><ellipse cx="76.8" cy="18.2" rx="1.5" ry="1.1" fill="#d84428"/><ellipse cx="51.5" cy="32.9" rx="3.5" ry="2.6" fill="#b82818"/><ellipse cx="77.9" cy="50.5" rx="4.1" ry="3.1" fill="#c02c1a"/><ellipse cx="5.5" cy="19.9" rx="2.0" ry="1.5" fill="#b82818"/><ellipse cx="15.9" cy="41.4" rx="3.3" ry="2.5" fill="#d84428"/><ellipse cx="16.6" cy="53.5" rx="4.7" ry="3.5" fill="#b82818"/><ellipse cx="5.8" cy="16.0" rx="1.8" ry="1.3" fill="#d43a22"/><ellipse cx="77.8" cy="22.0" rx="2.9" ry="2.2" fill="#a82414"/><ellipse cx="26.7" cy="32.0" rx="2.2" ry="1.6" fill="#c8301c"/><ellipse cx="30.3" cy="33.3" rx="2.1" ry="1.5" fill="#c8301c"/><ellipse cx="25.7" cy="15.7" rx="1.4" ry="1.0" fill="#c8301c"/><ellipse cx="35.3" cy="18.0" rx="2.9" ry="2.2" fill="#c02c1a"/><ellipse cx="0.0" cy="20.8" rx="3.1" ry="2.3" fill="#d84428"/><ellipse cx="15.4" cy="50.1" rx="2.7" ry="2.0" fill="#a82414"/><ellipse cx="62.2" cy="14.6" rx="2.1" ry="1.6" fill="#c02c1a"/><ellipse cx="64.9" cy="32.0" rx="3.3" ry="2.4" fill="#d43a22"/><ellipse cx="55.3" cy="38.7" rx="2.5" ry="1.8" fill="#d84428"/><ellipse cx="17.0" cy="52.0" rx="3.2" ry="2.4" fill="#c8301c"/><ellipse cx="75.1" cy="23.7" rx="2.7" ry="2.1" fill="#b82818"/><ellipse cx="29.4" cy="38.6" rx="3.8" ry="2.8" fill="#b82818"/><ellipse cx="67.6" cy="48.9" rx="4.4" ry="3.3" fill="#c8301c"/><ellipse cx="15.5" cy="19.1" rx="1.9" ry="1.4" fill="#b82818"/><ellipse cx="15.4" cy="36.9" rx="2.7" ry="2.0" fill="#c02c1a"/><ellipse cx="6.1" cy="15.1" rx="1.4" ry="1.1" fill="#d84428"/><ellipse cx="10.5" cy="19.4" rx="1.3" ry="1.0" fill="#c02c1a"/><ellipse cx="7.2" cy="19.2" rx="2.1" ry="1.6" fill="#b82818"/><ellipse cx="12.8" cy="36.1" rx="3.7" ry="2.8" fill="#b82818"/><ellipse cx="16.2" cy="51.3" rx="4.6" ry="3.4" fill="#d84428"/><ellipse cx="39.7" cy="21.9" rx="2.8" ry="2.1" fill="#c02c1a"/><ellipse cx="70.7" cy="16.9" rx="2.8" ry="2.1" fill="#a82414"/><ellipse cx="25.8" cy="55.0" rx="4.0" ry="3.0" fill="#c02c1a"/><ellipse cx="41.1" cy="26.1" rx="2.9" ry="2.2" fill="#a82414"/><ellipse cx="56.6" cy="20.1" rx="2.5" ry="1.8" fill="#d84428"/><ellipse cx="71.8" cy="24.5" rx="1.5" ry="1.1" fill="#b82818"/><ellipse cx="3.5" cy="55.1" rx="4.1" ry="3.1" fill="#d43a22"/><ellipse cx="31.6" cy="24.3" rx="2.6" ry="2.0" fill="#d43a22"/><ellipse cx="35.2" cy="20.7" rx="1.7" ry="1.3" fill="#d84428"/><ellipse cx="12.0" cy="21.2" rx="2.8" ry="2.1" fill="#d43a22"/><ellipse cx="66.8" cy="28.7" rx="1.7" ry="1.3" fill="#c02c1a"/><ellipse cx="46.8" cy="20.0" rx="1.9" ry="1.4" fill="#d84428"/><ellipse cx="21.0" cy="34.3" rx="1.9" ry="1.4" fill="#c02c1a"/><ellipse cx="32.8" cy="53.7" rx="3.4" ry="2.6" fill="#d84428"/><ellipse cx="35.8" cy="54.4" rx="4.3" ry="3.2" fill="#c02c1a"/><ellipse cx="65.5" cy="57.2" rx="3.4" ry="2.6" fill="#c8301c"/><ellipse cx="70.3" cy="55.1" rx="4.6" ry="3.5" fill="#d84428"/><ellipse cx="64.6" cy="25.5" rx="2.6" ry="2.0" fill="#a82414"/><ellipse cx="36.9" cy="16.5" rx="2.7" ry="2.0" fill="#c8301c"/><ellipse cx="24.6" cy="27.2" rx="3.3" ry="2.5" fill="#d43a22"/><ellipse cx="24.7" cy="21.6" rx="2.5" ry="1.9" fill="#b82818"/><ellipse cx="25.9" cy="21.7" rx="2.7" ry="2.1" fill="#c8301c"/><ellipse cx="16.3" cy="18.7" rx="1.3" ry="1.0" fill="#b82818"/><ellipse cx="64.9" cy="13.6" rx="1.3" ry="0.9" fill="#d43a22"/><ellipse cx="29.6" cy="13.6" rx="1.3" ry="1.0" fill="#c8301c"/><ellipse cx="29.0" cy="17.1" rx="2.9" ry="2.2" fill="#c02c1a"/><ellipse cx="16.9" cy="37.4" rx="3.0" ry="2.3" fill="#d43a22"/><ellipse cx="68.7" cy="30.3" rx="2.8" ry="2.1" fill="#b82818"/><path d="M32,2 v12 M44,4 v10 M12,6 v8" stroke="#c8c4be" stroke-width="0.600"/><ellipse cx="69" cy="9.500" rx="5" ry="3.400" fill="#cc3a20"/><ellipse cx="40" cy="14" rx="6" ry="4" fill="#c8341e"/><ellipse cx="30" cy="15.500" rx="3" ry="2" fill="#c8341e"/><ellipse cx="76.500" cy="14.500" rx="2.500" ry="3" fill="#c8341e"/><ellipse cx="75" cy="53" rx="4" ry="5" fill="#e8501c"/><path d="M6,58 Q6,22 31,20.500 Q54,22 55,58z" fill="#6b513f"/><path d="M13,58 Q14,31 31,30.500 Q47,32 49,58z" fill="#c59886"/><path d="M6,58 Q7,30 22,23 Q14,36 13,58z" fill="#4e392c"/><path d="M36,22 Q48,26 52,58 L44,58 Q44,34 36,22z" fill="#5e4535"/><path d="M31,21 Q40,30 42,58 L39,58 Q38,34 31,21z" fill="#6b513f" opacity="0.8"/><path d="M31,49.500 q3,-1.800 6,0 q-3,1.600 -6,0z" fill="#4a2c26"/><path d="M14,49.500 q3,-1.800 6,0 q-3,1.600 -6,0z" fill="#4a2c26"/></g></svg><div class="badge bv" style="left:3px;top:39.800px"><svg viewBox="0 0 20 20" width="12" height="12"><g fill="none" stroke="#fff" stroke-width="1.300" stroke-linecap="round"><rect x="7.500" y="3" width="5" height="9" rx="2.500"/><path d="M5,10 a5,5 0 0 0 10,0 M10,15 v2.500 M4,3.500 L16,17"/></g></svg></div></div>
<div class="tile" style="left:82.39999999999998px;top:78.9px;width:77.7px;height:57.4px;background:#6a3020"><svg viewBox="0 0 78 58" width="78" height="58" preserveAspectRatio="none" style="position:absolute;left:0;top:0"><defs><filter id="b2"><feGaussianBlur stdDeviation="0.55"/></filter><linearGradient id="sk2" x1="0" y1="0" x2="0" y2="1"><stop offset="0" stop-color="#b9c6cf"/><stop offset="0.22" stop-color="#d8ccc4"/><stop offset="0.34" stop-color="#e6c4a8"/><stop offset="0.37" stop-color="#6a6030"/><stop offset="1" stop-color="#54502a"/></linearGradient><radialGradient id="sn2" cx="0.5" cy="0.5" r="0.5"><stop offset="0" stop-color="#fff6c0"/><stop offset="0.3" stop-color="#fbb040"/><stop offset="0.7" stop-color="#e8501c" stop-opacity="0.7"/><stop offset="1" stop-color="#d8401c" stop-opacity="0"/></radialGradient></defs><rect width="78" height="58" fill="url(#sk2)"/><g filter="url(#b2)"><rect x="65.6" y="34.7" width="1.2" height="4.3" fill="#3e4e24"/><rect x="56.6" y="44.8" width="1.1" height="3.3" fill="#3e4e24"/><rect x="63.8" y="39.6" width="2.3" height="2.9" fill="#5a6a34"/><rect x="57.8" y="27.7" width="1.6" height="3.4" fill="#4a5a2a"/><rect x="59.8" y="47.6" width="1.7" height="4.2" fill="#3e4e24"/><rect x="72.5" y="39.2" width="1.4" height="4.6" fill="#3e4e24"/><rect x="69.6" y="22.8" width="1.5" height="3.1" fill="#4a5a2a"/><rect x="75.5" y="31.8" width="1.5" height="4.5" fill="#3e4e24"/><rect x="63.1" y="33.7" width="1.4" height="2.1" fill="#3e4e24"/><rect x="59.1" y="35.4" width="1.4" height="4.4" fill="#4a5a2a"/><rect x="68.0" y="35.8" width="1.5" height="4.7" fill="#4a5a2a"/><rect x="66.1" y="55.9" width="2.1" height="3.9" fill="#5a6a34"/><rect x="65.2" y="44.1" width="1.1" height="2.2" fill="#3e4e24"/><rect x="74.6" y="35.7" width="2.3" height="2.1" fill="#4a5a2a"/><rect x="69.1" y="31.8" width="1.7" height="3.4" fill="#4a5a2a"/><rect x="54.2" y="28.9" width="1.3" height="4.0" fill="#4a5a2a"/><rect x="64.6" y="55.4" width="2.4" height="2.0" fill="#5a6a34"/><rect x="63.8" y="45.4" width="1.8" height="3.9" fill="#5a6a34"/><rect x="74.8" y="46.9" width="2.1" height="2.8" fill="#4a5a2a"/><rect x="74.8" y="33.3" width="2.0" height="4.1" fill="#5a6a34"/><rect x="54.4" y="28.9" width="1.2" height="3.0" fill="#5a6a34"/><rect x="63.7" y="42.3" width="1.5" height="2.9" fill="#5a6a34"/><rect x="68.7" y="39.9" width="1.9" height="3.1" fill="#5a6a34"/><rect x="55.0" y="40.5" width="1.2" height="2.2" fill="#4a5a2a"/><rect x="72.9" y="53.9" width="1.4" height="4.5" fill="#5a6a34"/><rect x="71.6" y="39.3" width="1.2" height="4.6" fill="#3e4e24"/><rect x="51.5" y="31.1" width="1.7" height="4.4" fill="#3e4e24"/><rect x="57.1" y="44.9" width="1.5" height="4.0" fill="#4a5a2a"/><rect x="59.3" y="49.3" width="2.2" height="4.5" fill="#5a6a34"/><rect x="77.5" y="45.1" width="1.2" height="4.2" fill="#3e4e24"/><ellipse cx="52.4" cy="48.1" rx="2.1" ry="1.6" fill="#b81c18"/><ellipse cx="70.3" cy="24.4" rx="1.7" ry="1.3" fill="#c8201c"/><ellipse cx="3.2" cy="35.9" rx="3.1" ry="2.5" fill="#d83428"/><ellipse cx="16.9" cy="37.1" rx="2.9" ry="2.4" fill="#b81c18"/><ellipse cx="64.3" cy="28.6" rx="1.7" ry="1.4" fill="#a81a16"/><ellipse cx="67.4" cy="35.8" rx="2.8" ry="2.2" fill="#d42a22"/><ellipse cx="67.0" cy="28.0" rx="2.0" ry="1.6" fill="#a81a16"/><ellipse cx="60.6" cy="51.5" rx="2.6" ry="2.1" fill="#d42a22"/><ellipse cx="6.1" cy="34.0" rx="2.4" ry="1.9" fill="#d42a22"/><ellipse cx="76.1" cy="47.2" rx="3.3" ry="2.6" fill="#d83428"/><ellipse cx="22.7" cy="26.0" rx="2.4" ry="1.9" fill="#a81a16"/><ellipse cx="59.2" cy="30.8" rx="3.2" ry="2.5" fill="#a81a16"/><ellipse cx="75.3" cy="41.2" rx="1.5" ry="1.2" fill="#b81c18"/><ellipse cx="70.9" cy="43.3" rx="1.6" ry="1.3" fill="#c8201c"/><ellipse cx="56.7" cy="34.4" rx="1.7" ry="1.4" fill="#d83428"/><ellipse cx="13.1" cy="50.0" rx="3.3" ry="2.6" fill="#d42a22"/><ellipse cx="68.8" cy="43.8" rx="2.7" ry="2.1" fill="#c8201c"/><ellipse cx="50.9" cy="35.3" rx="2.5" ry="2.0" fill="#d42a22"/><ellipse cx="53.7" cy="23.0" rx="3.0" ry="2.4" fill="#d42a22"/><ellipse cx="63.9" cy="36.2" rx="2.6" ry="2.1" fill="#d83428"/><ellipse cx="71.0" cy="52.0" rx="3.1" ry="2.5" fill="#a81a16"/><ellipse cx="53.2" cy="33.2" rx="2.4" ry="2.0" fill="#a81a16"/><ellipse cx="51.5" cy="43.8" rx="2.3" ry="1.8" fill="#a81a16"/><ellipse cx="58.5" cy="53.5" rx="1.9" ry="1.5" fill="#a81a16"/><ellipse cx="74.4" cy="46.7" rx="2.5" ry="2.0" fill="#d42a22"/><ellipse cx="13.1" cy="58.0" rx="2.9" ry="2.3" fill="#b81c18"/><ellipse cx="20.8" cy="45.0" rx="2.2" ry="1.8" fill="#c8201c"/><ellipse cx="21.7" cy="53.6" rx="2.6" ry="2.0" fill="#a81a16"/><ellipse cx="56.8" cy="27.4" rx="2.3" ry="1.8" fill="#a81a16"/><ellipse cx="60.0" cy="29.5" rx="2.0" ry="1.6" fill="#a81a16"/><ellipse cx="58.6" cy="53.5" rx="1.8" ry="1.4" fill="#c8201c"/><ellipse cx="73.5" cy="21.6" rx="2.7" ry="2.1" fill="#d83428"/><ellipse cx="4.8" cy="45.1" rx="2.0" ry="1.6" fill="#b81c18"/><ellipse cx="23.1" cy="33.4" rx="3.3" ry="2.7" fill="#a81a16"/><ellipse cx="10.0" cy="47.3" rx="1.8" ry="1.4" fill="#d42a22"/><ellipse cx="64.0" cy="34.8" rx="2.7" ry="2.2" fill="#c8201c"/><ellipse cx="14.2" cy="45.7" rx="2.0" ry="1.6" fill="#c8201c"/><ellipse cx="11.1" cy="40.6" rx="1.5" ry="1.2" fill="#d83428"/><ellipse cx="61.9" cy="24.2" rx="2.0" ry="1.6" fill="#d42a22"/><ellipse cx="5.9" cy="50.2" rx="1.7" ry="1.4" fill="#c8201c"/><ellipse cx="14.9" cy="55.4" rx="2.4" ry="1.9" fill="#d42a22"/><ellipse cx="71.7" cy="45.4" rx="3.0" ry="2.4" fill="#d83428"/><ellipse cx="67.8" cy="48.5" rx="2.5" ry="2.0" fill="#d83428"/><ellipse cx="18.7" cy="45.7" rx="2.5" ry="2.0" fill="#b81c18"/><ellipse cx="72.2" cy="41.1" rx="3.1" ry="2.5" fill="#d83428"/><ellipse cx="66.7" cy="22.9" rx="2.3" ry="1.8" fill="#d42a22"/><ellipse cx="67.0" cy="39.6" rx="2.8" ry="2.3" fill="#c8201c"/><ellipse cx="65.9" cy="42.4" rx="2.8" ry="2.3" fill="#d83428"/><ellipse cx="58.7" cy="51.3" rx="2.9" ry="2.3" fill="#b81c18"/><ellipse cx="68.2" cy="27.3" rx="1.9" ry="1.5" fill="#d42a22"/><ellipse cx="68.5" cy="23.3" rx="2.2" ry="1.8" fill="#b81c18"/><ellipse cx="16.8" cy="39.1" rx="2.9" ry="2.3" fill="#d42a22"/><ellipse cx="3.5" cy="21.1" rx="2.2" ry="1.8" fill="#d83428"/><ellipse cx="61.0" cy="55.6" rx="3.3" ry="2.7" fill="#d83428"/><ellipse cx="5.5" cy="36.5" rx="1.6" ry="1.3" fill="#d42a22"/><ellipse cx="77.5" cy="29.1" rx="1.7" ry="1.4" fill="#d83428"/><ellipse cx="59.6" cy="54.7" rx="3.2" ry="2.5" fill="#d42a22"/><ellipse cx="61.0" cy="35.0" rx="1.5" ry="1.2" fill="#a81a16"/><ellipse cx="8.3" cy="38.8" rx="2.2" ry="1.8" fill="#d83428"/><ellipse cx="62.5" cy="46.1" rx="3.1" ry="2.5" fill="#d42a22"/><ellipse cx="61.7" cy="34.4" rx="1.9" ry="1.6" fill="#c8201c"/><ellipse cx="64.3" cy="55.2" rx="2.8" ry="2.3" fill="#b81c18"/><ellipse cx="51.6" cy="26.1" rx="1.9" ry="1.5" fill="#c8201c"/><ellipse cx="0.5" cy="52.6" rx="2.2" ry="1.7" fill="#b81c18"/><ellipse cx="64.5" cy="43.5" rx="2.4" ry="1.9" fill="#d42a22"/><ellipse cx="66.7" cy="36.2" rx="2.4" ry="1.9" fill="#d42a22"/><ellipse cx="65.3" cy="45.6" rx="1.7" ry="1.4" fill="#d42a22"/><ellipse cx="20.0" cy="35.3" rx="3.1" ry="2.5" fill="#d42a22"/><ellipse cx="2.5" cy="22.5" rx="1.4" ry="1.2" fill="#a81a16"/><ellipse cx="72.6" cy="45.4" rx="1.5" ry="1.2" fill="#d42a22"/><rect x="0" y="20" width="26" height="38" fill="#7a1c12" opacity="0.7"/><path d="M4,4 v20 M7,6 v12" stroke="#3a140c" stroke-width="0.900"/><ellipse cx="6" cy="2" rx="6" ry="3.600" fill="#b81c14"/><path d="M5,18 Q8,6 18,8 Q27,12 26,24 Q24,38 12,40 Q4,36 5,18z" fill="#c8240e"/><circle cx="20" cy="16" r="9" fill="url(#sn2)"/><path d="M2,40 Q8,34 14,40 Q18,50 10,56 Q2,54 2,40z" fill="#b01c14"/><ellipse cx="73.500" cy="31.500" rx="4.500" ry="6" fill="#c8201c"/><ellipse cx="70" cy="52" rx="7" ry="5.500" fill="#c8201c"/><ellipse cx="71" cy="54" rx="1.600" ry="1.200" fill="#2a2a6a"/><path d="M23,58 Q22,30 26,14 Q30,4.500 37,5 Q45,5 48,16 Q51,34 50,58z" fill="#7a5a46"/><path d="M13,58 Q14,42 24,38 L30,36 h12 L52,39 Q62,42 63,58z" fill="#efebe8"/><path d="M31,30 h10 v8 q-5,4 -10,0z" fill="#d2a898"/><ellipse cx="36.400" cy="23" rx="8.300" ry="12.500" fill="#dcb6a6"/><path d="M27,26 Q26,10 36,8 Q30,16 29,40 Q28,50 30,57 L24,57 Q24,40 27,26z" fill="#6a4c3a"/><path d="M46,26 Q47,10 37,8 Q43,16 44,40 Q45,50 43,57 L50,57 Q49,40 46,26z" fill="#6a4c3a"/><path d="M31,20.500 h4 M38.500,20.500 h4" stroke="#5a3a30" stroke-width="1"/><path d="M34.500,29.500 h4" stroke="#b8605c" stroke-width="1.300"/><path d="M36.600,22 v4.500" stroke="#c89a8a" stroke-width="1"/></g></svg><div class="badge bv" style="left:3px;top:39.800px"><svg viewBox="0 0 20 20" width="12" height="12"><g fill="none" stroke="#fff" stroke-width="1.300" stroke-linecap="round"><rect x="7.500" y="3" width="5" height="9" rx="2.500"/><path d="M5,10 a5,5 0 0 0 10,0 M10,15 v2.500 M4,3.500 L16,17"/></g></svg></div></div>
<div class="tile" style="left:2.2999999999999545px;top:139.5px;width:77.7px;height:57.4px;background:linear-gradient(120deg,#f2eef1 0%,#f1f0f0 50%,#eeeeee 100%)"><div class="av" style="left:22.599999999999998px;top:12.2px;width:32.4px;height:32.4px"><svg viewBox="0 0 32 32" width="32.400" height="32.400"><defs><radialGradient id="bl3" cx="0.5" cy="0.42" r="0.62"><stop offset="0" stop-color="#48aefa"/><stop offset="0.6" stop-color="#1a80de"/><stop offset="1" stop-color="#0a56b0"/></radialGradient></defs><rect width="32" height="32" fill="url(#bl3)"/><circle cx="16" cy="16" r="15.200" fill="none" stroke="#6cc6ff" stroke-width="1.200" opacity="0.75"/><ellipse cx="16" cy="12.500" rx="4.700" ry="5.600" fill="#0b4ca4"/><path d="M3,32 Q3,24 11,22 Q13.200,21.400 13.500,18.500 L18.500,18.500 Q18.800,21.400 21,22 Q29,24 29,32z" fill="#0b4ca4"/></svg></div><div class="badge" style="left:3px;top:39.1px"><svg viewBox="0 0 20 20" width="12" height="12"><g fill="none" stroke="#fff" stroke-width="1.3" stroke-linecap="round"><rect x="7.500" y="3" width="5" height="9" rx="2.500"/><path d="M5,10 a5,5 0 0 0 10,0 M10,15 v2.500 M4,3.500 L16,17"/></g></svg></div></div>
<div class="tile" style="left:82.39999999999998px;top:139.5px;width:77.7px;height:57.4px;background:#b02020"><svg viewBox="0 0 78 58" width="78" height="58" preserveAspectRatio="none" style="position:absolute;left:0;top:0"><defs><filter id="b3"><feGaussianBlur stdDeviation="0.8"/></filter></defs><rect width="78" height="58" fill="#a89aa0"/><g filter="url(#b3)"><path d="M0,0 h22 l-6,20 l-16,12z" fill="#b4acb2"/><rect x="0" y="30" width="78" height="28" fill="#7a2020"/><path d="M14,0 h64 v40 h-50 q-16,-8 -14,-40z" fill="#c81828"/><g fill="#e01c2a"><circle cx="36" cy="12" r="12"/><circle cx="58" cy="9" r="13"/><circle cx="22" cy="26" r="12"/><circle cx="52" cy="30" r="13"/><circle cx="74" cy="26" r="10"/><circle cx="10" cy="14" r="5"/><circle cx="72" cy="4" r="8"/></g><g fill="#2a0a0c"><ellipse cx="36" cy="13" rx="4" ry="3"/><ellipse cx="60" cy="11" rx="4" ry="3"/><ellipse cx="24" cy="28" rx="4" ry="3"/><ellipse cx="52" cy="28" rx="4" ry="2.500"/></g><rect x="0" y="44" width="78" height="14" fill="#3a2426" opacity="0.85"/><rect x="64" y="36" width="14" height="10" fill="#c8b0b0" opacity="0.5"/><path d="M28,58 q0,-24 12,-24 q12,0 12,24z" fill="#2a1a16"/><ellipse cx="40" cy="48" rx="7.500" ry="9" fill="#c89a86"/><path d="M30,44 q2,-10 10,-10 q8,0 10,10 q-4,-5 -10,-5 q-6,0 -10,5z" fill="#24140f"/></g><text x="-2" y="55.200" font-family="'Liberation Sans',sans-serif" font-weight="bold" font-size="5.400" fill="#fff" textLength="82" lengthAdjust="spacingAndGlyphs">ПАМ’ЯТІ ТА ПРИМИРЕННЯ</text><text x="44" y="49.500" font-family="'Liberation Sans',sans-serif" font-weight="bold" font-size="4.600" fill="#fff">МАЯ</text><path d="M28,58 q0,-6 3,-12 q3,-12 9,-12 q8,0 10,12 q2,6 2,12z" fill="#2a1a16" opacity="0.9"/><ellipse cx="40" cy="49" rx="7" ry="8.500" fill="#c89a86"/><path d="M31,46 q1,-11 9,-11 q8,0 9,11 q-4,-6 -9,-6 q-5,0 -9,6z" fill="#24140f"/></svg><div class="badge bv" style="left:3px;top:39.800px"><svg viewBox="0 0 20 20" width="12" height="12"><g fill="none" stroke="#fff" stroke-width="1.300" stroke-linecap="round"><rect x="7.500" y="3" width="5" height="9" rx="2.500"/><path d="M5,10 a5,5 0 0 0 10,0 M10,15 v2.500 M4,3.500 L16,17"/></g></svg></div></div>
<div class="tile" style="left:2.2999999999999545px;top:199.5px;width:77.7px;height:57.4px;background:linear-gradient(120deg,#f4e8f0 0%,#f5ecf0 50%,#f4eeef 100%)"><div class="av" style="left:22.599999999999998px;top:12.400000000000002px;width:32.4px;height:32.4px"><svg viewBox="0 0 32 32" width="32.400" height="32.400"><defs><filter id="b4a"><feGaussianBlur stdDeviation="0.5"/></filter></defs><rect width="32" height="32" fill="#b8bcbc"/><g filter="url(#b4a)"><rect y="0" width="32" height="10" fill="#8a908e"/><path d="M0,8 l4,-5 l4,6 l5,-7 l5,8 l5,-7 l5,6 l4,-3 v16 h-32z" fill="#dfe3e4"/><path d="M6,4 v16 M14,2 v18 M23,3 v18 M28,6 v14" stroke="#6a6a64" stroke-width="0.900"/><path d="M2,10 l8,2 M12,8 l8,3 M20,9 l9,2" stroke="#f4f6f6" stroke-width="1.600"/><rect y="22" width="32" height="10" fill="#d2d6d8"/><path d="M18,24 l14,-2 v4 l-14,2z" fill="#a8acae"/><path d="M4,32 q0,-11 4,-13 l5,0 q5,2 6,13z" fill="#111"/><circle cx="11" cy="16" r="2.900" fill="#c8a088"/><path d="M8,15.500 q3,-4.500 6,0 l0,-1.500 q-3,-3.500 -6,0z" fill="#161616"/></g></svg></div><div class="badge" style="left:3px;top:39.1px"><svg viewBox="0 0 20 20" width="12" height="12"><g fill="none" stroke="#fff" stroke-width="1.3" stroke-linecap="round"><rect x="7.500" y="3" width="5" height="9" rx="2.500"/><path d="M5,10 a5,5 0 0 0 10,0 M10,15 v2.500 M4,3.500 L16,17"/></g></svg></div></div>
<div class="tile" style="left:82.39999999999998px;top:199.5px;width:77.7px;height:57.4px;background:#b02020"><svg viewBox="0 0 78 58" width="78" height="58" preserveAspectRatio="none" style="position:absolute;left:0;top:0"><defs><filter id="b4"><feGaussianBlur stdDeviation="0.7"/></filter></defs><rect width="78" height="58" fill="#cfc8c8"/><g filter="url(#b4)"><rect x="8" y="0" width="12" height="20" fill="#e8e4e4"/><rect x="38" y="0" width="26" height="22" fill="#b9b4b6"/><g fill="#6a6468"><rect x="42" y="3" width="4" height="4"/><rect x="50" y="3" width="4" height="4"/><rect x="58" y="3" width="4" height="4"/><rect x="42" y="11" width="4" height="4"/><rect x="50" y="11" width="4" height="4"/><rect x="58" y="11" width="4" height="4"/><rect x="10" y="2" width="3" height="3"/><rect x="15" y="2" width="3" height="3"/><rect x="10" y="8" width="3" height="3"/></g><g fill="#d4161c"><circle cx="30" cy="8" r="10"/><circle cx="4" cy="10" r="8"/><circle cx="72" cy="10" r="9"/><circle cx="26" cy="40" r="12"/><circle cx="8" cy="48" r="10"/><circle cx="30" cy="54" r="8"/></g></g><rect x="0" y="19.500" width="78" height="19" fill="#40282a" opacity="0.78"/><g filter="url(#b4)"><rect x="34" y="38" width="44" height="20" fill="#7a1c18"/><rect x="20" y="40" width="16" height="18" fill="#e8e0e0"/><path d="M34,58 q0,-20 9,-20 q9,0 9,20z" fill="#5a3c30"/><ellipse cx="43" cy="48" rx="6" ry="7" fill="#9a6a55"/><g transform="translate(60,49)"><path d="M0,-10 L3,-3.500 L10,-3.500 L4.500,1 L6.500,8 L0,4 L-6.500,8 L-4.500,1 L-10,-3.500 L-3,-3.500Z" fill="#e8c23a"/><path d="M0,-7.500 L2,-2.500 L7.500,-2.500 L3.200,0.800 L4.800,6 L0,3 L-4.800,6 L-3.200,0.800 L-7.500,-2.500 L-2,-2.500Z" fill="#c61a1a"/><circle r="2.800" fill="#f0e0c0"/></g><path d="M68,40 l10,0 l0,18 l-6,0z" fill="#e88a1c"/><path d="M72,40 l2,0 l-1,18 l-2,0z M76,40 l2,0 l0,18 l-1.500,0z" fill="#2a1a10"/><ellipse cx="24" cy="56" rx="5" ry="3" fill="#e06078"/></g><g font-family="'Liberation Sans',sans-serif" font-weight="bold" fill="#fff"><text x="0.800" y="29" font-size="8.800" textLength="23.500" lengthAdjust="spacingAndGlyphs">МАЯ –</text><text x="-3" y="36.600" font-size="6.600" textLength="84" lengthAdjust="spacingAndGlyphs">ЕНЬ ПАМЯТИ И ПРИМИРЕН</text></g></svg><div class="badge bv" style="left:3px;top:39.800px"><svg viewBox="0 0 20 20" width="12" height="12"><g fill="none" stroke="#fff" stroke-width="1.300" stroke-linecap="round"><rect x="7.500" y="3" width="5" height="9" rx="2.500"/><path d="M5,10 a5,5 0 0 0 10,0 M10,15 v2.500 M4,3.500 L16,17"/></g></svg></div></div>
<div class="tile" style="left:2.2999999999999545px;top:259.6px;width:77.7px;height:57.4px;background:linear-gradient(120deg,#f5ebee 0%,#f4ecf0 50%,#f2eaf0 100%)"><div class="av" style="left:22.599999999999998px;top:12.2px;width:32.4px;height:32.4px"><svg viewBox="0 0 32 32" width="32" height="32"><defs><linearGradient id="se5" x1="0" y1="0" x2="0" y2="1"><stop offset="0" stop-color="#bcdcea"/><stop offset="0.3" stop-color="#8cc0d8"/><stop offset="0.55" stop-color="#3f8fb8"/><stop offset="1" stop-color="#2a6f98"/></linearGradient></defs><rect width="32" height="32" fill="url(#se5)"/><g fill="#f2f9fc" opacity="0.8"><rect x="20.500" y="7" width="2.600" height="1.200"/><rect x="20" y="9.600" width="3.600" height="1.200"/><rect x="20.600" y="12" width="2.600" height="1"/><rect x="19.600" y="14.400" width="4.400" height="1.200"/><rect x="20.400" y="17" width="3" height="1"/><rect x="19.400" y="19.400" width="4.800" height="1.200"/><rect x="20.600" y="22" width="2.600" height="1"/><rect x="19.800" y="24.400" width="4" height="1.200"/></g><path d="M0,14 h32 M0,18 h32 M0,22 h32 M0,26 h32" stroke="#d0e8f2" stroke-width="0.500" opacity="0.5"/></svg></div><div class="badge" style="left:3px;top:39.1px"><svg viewBox="0 0 20 20" width="12" height="12"><g fill="none" stroke="#fff" stroke-width="1.3" stroke-linecap="round"><rect x="7.500" y="3" width="5" height="9" rx="2.500"/><path d="M5,10 a5,5 0 0 0 10,0 M10,15 v2.500 M4,3.500 L16,17"/></g></svg></div></div>
<div class="tile" style="left:82.39999999999998px;top:259.6px;width:77.7px;height:57.4px;background:linear-gradient(120deg,#f4ecf1 0%,#f6eaef 50%,#f4e6ee 100%)"><div class="av" style="left:23.200000000000003px;top:12.399999999999999px;width:32px;height:32px;background:#fff;color:#242424;font-size:12.500px;line-height:32px;text-align:center;box-shadow:0 1px 2px rgba(0,0,0,0.12)">ХВ</div><div class="badge" style="left:3px;top:39.1px"><svg viewBox="0 0 20 20" width="12" height="12"><g fill="none" stroke="#fff" stroke-width="1.3" stroke-linecap="round"><rect x="7.500" y="3" width="5" height="9" rx="2.500"/><path d="M5,10 a5,5 0 0 0 10,0 M10,15 v2.500 M4,3.500 L16,17"/></g></svg></div></div>
<div class="tile" style="left:42.5px;top:319.5px;width:77.5px;height:57.8px;background:linear-gradient(120deg,#e6eef7 0%,#e9f0f5 50%,#f0eef3 100%)"><div class="av" style="left:22.8px;top:12.8px;width:32.4px;height:32.4px"><svg viewBox="0 0 32 32" width="32.400" height="32.400"><defs><filter id="b7"><feGaussianBlur stdDeviation="0.7"/></filter></defs><rect width="32" height="32" fill="#7a5a40"/><g filter="url(#b7)"><rect x="19" y="0" width="13" height="32" fill="#9a7a54"/><rect x="24" y="8" width="8" height="14" fill="#b89868"/><path d="M0,0 h7 l-3,32 h-4z" fill="#5a3e2c"/><path d="M6,8 q2,-7 10,-6 q8,1 8,10 q2,8 -3,14 l-7,2 q-8,-4 -8,-20z" fill="#ead9b4"/><path d="M9,22 q6,-3 12,0 l6,10 h-20z" fill="#dcb9a2"/><path d="M10,8 q5,4 6,10 q1,6 -3,10" stroke="#cdb689" stroke-width="2.200" fill="none"/><path d="M14,4 q6,4 6,14" stroke="#f4e8cc" stroke-width="1.600" fill="none"/></g></svg></div><div class="badge" style="left:3px;top:39.1px"><svg viewBox="0 0 20 20" width="12" height="12"><g fill="none" stroke="#fff" stroke-width="1.3" stroke-linecap="round"><rect x="7.500" y="3" width="5" height="9" rx="2.500"/><path d="M5,10 a5,5 0 0 0 10,0 M10,15 v2.500 M4,3.500 L16,17"/></g></svg></div></div>
<div class="tile big" style="left:2.7999999999999545px;top:379.5px;width:157.2px;height:87.5px;background:#1b1b1b"><svg viewBox="0 0 157 88" width="157.200" height="87.500" preserveAspectRatio="none" style="position:absolute;left:0;top:0"><defs><filter id="b8"><feGaussianBlur stdDeviation="0.55"/></filter><filter id="b9"><feGaussianBlur stdDeviation="1.2"/></filter><radialGradient id="pp8" cx="0.5" cy="0.45" r="0.55"><stop offset="0" stop-color="#a81808"/><stop offset="0.45" stop-color="#e4301a"/><stop offset="0.8" stop-color="#f23c20"/><stop offset="1" stop-color="#d82814"/></radialGradient><linearGradient id="fc8" x1="0" y1="0" x2="1" y2="0"><stop offset="0" stop-color="#d8a690"/><stop offset="0.5" stop-color="#e6bca8"/><stop offset="1" stop-color="#c8957e"/></linearGradient></defs><rect width="157" height="88" fill="#1b1b1b"/><g filter="url(#b8)">
<path d="M28,42 q-2,20 0,46 M36,40 q-6,14 -8,26" stroke="#3a4a1e" stroke-width="1.800" fill="none"/>
<path d="M9,14 Q12,2 28,1 Q44,0 50,10 Q56,20 50,32 Q44,44 30,44 Q16,44 10,32 Q6,22 9,14z" fill="url(#pp8)"/>
<path d="M12,30 Q20,20 34,24 Q44,28 50,30 Q44,44 30,44 Q16,44 12,30z" fill="#e63620" opacity="0.8"/>
<ellipse cx="32" cy="20" rx="6" ry="4.500" fill="#2a140c"/><ellipse cx="32" cy="20" rx="9" ry="7" fill="#5a1408" opacity="0.4"/>
<path d="M1,52 Q6,42 22,42 Q36,42 40,54 Q42,68 32,78 Q20,86 8,78 Q-2,68 1,52z" fill="url(#pp8)"/>
<path d="M14,58 q6,-5 11,-1 l5,8 l-8,3 l-5,9 q-6,-8 -3,-19z" fill="#4a1a0a" opacity="0.85"/><ellipse cx="20" cy="64" rx="3" ry="4" fill="#c8b060" opacity="0.35"/>
<path d="M30,80 Q34,72 44,74 Q52,76 52,84 L50,88 L32,88 Q28,86 30,80z" fill="#b01c2c"/>
<ellipse cx="6" cy="86" rx="8" ry="3.500" fill="#4a5a22"/>
<path d="M42,74 Q38,40 46,24 Q54,8 70,9 Q88,9 95,26 Q102,48 99,76 L84,82 L56,82z" fill="#35211a"/>
<path d="M50,88 Q52,78 62,76 L78,76 Q96,78 112,86 L114,88z" fill="#151515"/>
<path d="M57,88 Q58,78 62,72 L78,72 Q84,78 86,88z" fill="#d9ab96"/>
<path d="M48,40 Q47,22 58,18 Q70,14 80,19 Q89,25 88,42 Q87,58 80,68 Q72,76 64,72 Q54,64 48,40z" fill="url(#fc8)"/>
<path d="M46,50 Q42,20 56,13 Q70,7 82,13 Q96,22 92,52 Q92,30 82,22 Q70,18 62,22 Q52,28 46,50z" fill="#2e1c16"/>
<path d="M64,10 Q60,18 50,30" stroke="#4a3026" stroke-width="0.800" fill="none"/>
<path d="M53,36 q4,-2 8,0 M72,36 q4,-2 8,0" stroke="#5a3a2c" stroke-width="1.200" fill="none"/>
<ellipse cx="57" cy="39.600" rx="3" ry="1.300" fill="#3a2620"/><ellipse cx="76.500" cy="39.600" rx="3" ry="1.300" fill="#3a2620"/>
<path d="M66,40 q-1,8 -2,11 q3,2 6,0" stroke="#c08e78" stroke-width="1.300" fill="none"/>
<path d="M62,59 q5,-1.500 11,0 q-5,2.400 -11,0z" fill="#b0605a"/>
<circle cx="48" cy="57" r="0.900" fill="#c8c8c8"/>
</g></svg></div>
</div>
<div id="taskbar" class="abs">
<svg class="abs" viewBox="0 0 11 11.500" width="11" height="11.500" style="left:10.500px;top:8px"><path d="M0,1.600 L4.700,0.900 V5.400 H0z M5.400,0.800 L11,0 V5.400 H5.400z M0,6.100 H4.700 V10.600 L0,9.900z M5.400,6.100 H11 V11.500 L5.400,10.700z" fill="#fff"/></svg>
<div class="abs" style="left:32px;top:0.500px;width:192px;height:26.500px;background:#f3f3f3"></div>
<svg class="abs" viewBox="0 0 12 12" width="11" height="11" style="left:39.500px;top:7.5px"><circle cx="7.600" cy="4.400" r="3.300" fill="none" stroke="#3a3a3a" stroke-width="1.200"/><path d="M5.200,6.800 L1,11" stroke="#3a3a3a" stroke-width="1.300" stroke-linecap="round"/></svg>
<div class="abs" style="left:58.500px;top:8px;font-size:10.300px;line-height:12px;color:#3a3a3a;white-space:nowrap" id="srch">Пошук</div>
<svg class="abs" viewBox="170 549 54 27" width="54" height="27" style="left:170px;top:0"><defs><linearGradient id="stg" x1="0" y1="0" x2="1" y2="1"><stop offset="0" stop-color="#ffd84a"/><stop offset="1" stop-color="#f5a623"/></linearGradient></defs><path d="M192,554 Q194.24,559.76 200,562 Q194.24,564.24 192,570 Q189.76,564.24 184,562 Q189.76,559.76 192,554z" fill="url(#stg)"/><path d="M207,561.9 Q207.952,564.348 210.4,565.3 Q207.952,566.252 207,568.6999999999999 Q206.048,566.252 203.6,565.3 Q206.048,564.348 207,561.9z" fill="#f6b73c"/><path d="M178.8,565.0999999999999 Q179.556,567.044 181.5,567.8 Q179.556,568.5559999999999 178.8,570.5 Q178.044,568.5559999999999 176.10000000000002,567.8 Q178.044,567.044 178.8,565.0999999999999z" fill="#2f9ce8"/><circle cx="203" cy="555.800" r="1.100" fill="#f0642c"/><circle cx="215.500" cy="569" r="1.100" fill="#7ac040"/></svg>
<svg class="abs" viewBox="0 0 14 11" width="14" height="11" style="left:232.500px;top:8.3px"><rect x="3.200" y="2.800" width="6.600" height="5.400" fill="none" stroke="#e8e8e8" stroke-width="1.100"/><path d="M0.800,0.600 v9.800 M12.400,0.600 v3.200 M12.400,5.600 v4.800 M3.200,0.800 h6.600 M3.200,10.200 h6.600" stroke="#e8e8e8" stroke-width="1.100"/></svg>
<svg class="abs" viewBox="0 0 18 16" width="18" height="16" style="left:265px;top:6px"><defs><linearGradient id="cp1" x1="0" y1="0" x2="1" y2="1"><stop offset="0" stop-color="#2a8cf0"/><stop offset="0.5" stop-color="#8a5cf0"/><stop offset="1" stop-color="#f05a9a"/></linearGradient><linearGradient id="cp2" x1="0" y1="0" x2="1" y2="1"><stop offset="0" stop-color="#38c8e8"/><stop offset="0.6" stop-color="#f0c040"/><stop offset="1" stop-color="#f07838"/></linearGradient></defs><path d="M6,1 h5 q2.500,0 3.200,2.400 l1.600,5.600 q0.800,3 -2,3 h-2 l-2.400,-8.400 q-0.500,-1.600 -2,-1.600 h-3 q0.600,-1 1.600,-1z" fill="url(#cp1)"/><path d="M12,15 h-5 q-2.500,0 -3.200,-2.400 l-1.600,-5.600 q-0.800,-3 2,-3 h2 l2.400,8.400 q0.500,1.600 2,1.600 h3 q-0.600,1 -1.600,1z" fill="url(#cp2)"/></svg>
<svg class="abs" viewBox="0 0 16 14" width="16" height="14" style="left:299px;top:6.6px"><path d="M0.500,1.500 q0,-1 1,-1 h4 l1.500,1.500 h8 q0.500,0 0.500,0.800 v9.200 h-15z" fill="#f5b83a"/><rect x="0.500" y="4" width="15" height="9" rx="0.800" fill="#fcd462"/><rect x="3.400" y="8.400" width="9.200" height="4.600" fill="#3c8fdc"/><rect x="5.200" y="10.400" width="5.600" height="2.600" fill="#fcd462"/></svg>
<svg class="abs" viewBox="0 0 16 17" width="16" height="17" style="left:332.200px;top:5px"><path d="M5,4.500 v-1.200 a3,2.600 0 0 1 6,0 v1.200" fill="none" stroke="#3a9ce0" stroke-width="1.200"/><rect x="0.800" y="4" width="14.400" height="12.400" rx="1.800" fill="#f2f2f2"/><rect x="4.600" y="6.800" width="3" height="3" fill="#f25022"/><rect x="8.400" y="6.800" width="3" height="3" fill="#7fba00"/><rect x="4.600" y="10.600" width="3" height="3" fill="#00a4ef"/><rect x="8.400" y="10.600" width="3" height="3" fill="#ffb900"/></svg>
<svg class="abs" viewBox="0 0 17 15" width="17" height="15" style="left:364.500px;top:6.4px"><path d="M5,5 L11.500,0.500 L17,4.500 V13 q0,1 -1,1 H6z" fill="#1a7fd8"/><path d="M6,14 L17,5.500 V13 q0,1 -1,1z" fill="#3aa8f0"/><path d="M5,6 L16,14 H6z" fill="#1068c0"/><rect x="0" y="3.600" width="9.200" height="9.200" rx="1.200" fill="#0f5fb8"/><ellipse cx="4.600" cy="8.200" rx="2.300" ry="2.700" fill="none" stroke="#fff" stroke-width="1.300"/></svg>
<div class="abs" style="left:390.200px;top:0;width:32.600px;height:27px;background:#3b4755"></div>
<div class="abs" style="left:390.200px;top:25.200px;width:32.600px;height:1.800px;background:#8fc0ee"></div>
<svg class="abs" viewBox="0 0 20 16" width="20" height="16" style="left:395.500px;top:5.6px"><circle cx="15" cy="3.600" r="2.200" fill="#5059c9"/><rect x="12" y="6.400" width="7" height="6.600" rx="1.800" fill="#5059c9"/><circle cx="10" cy="2.800" r="2.600" fill="#7b83eb"/><rect x="5.500" y="6" width="9.500" height="9" rx="2" fill="#7b83eb"/><rect x="0.500" y="3.600" width="9.400" height="9.400" rx="1.200" fill="#4b53bc"/><path d="M2.800,6.300 h4.800 M5.200,6.300 v4.800" stroke="#fff" stroke-width="1.300"/></svg>
<div class="abs" style="left:405.200px;top:12.2px;width:10px;height:9.600px;border-radius:5px;background:#d0342c;color:#fff;font-size:6.500px;font-weight:bold;line-height:9.600px;text-align:center;letter-spacing:-0.300px">9+</div>
<div class="abs" style="left:426px;top:25.200px;width:26.800px;height:1.800px;background:#8fc0ee"></div>
<svg class="abs" viewBox="0 0 16 15" width="16" height="15" style="left:431.800px;top:6.3px"><path d="M9,0.500 H14.600 q0.900,0 0.900,0.900 V13.600 q0,0.900 -0.900,0.900 H9z" fill="#f4f0ee"/><path d="M10,4 h4 M10,6.600 h4 M10,9.200 h4 M10,11.600 h4" stroke="#d04a28" stroke-width="1"/><path d="M0,1.600 L9.400,0 V15 L0,13.400z" fill="#d24726"/><text x="2.300" y="11" font-family="'Liberation Sans',sans-serif" font-weight="bold" font-size="8.500" fill="#fff">P</text></svg>
<svg class="abs" viewBox="0 0 16 16" width="15" height="15" style="left:742.800px;top:6.3px"><defs><radialGradient id="wsn" cx="0.400" cy="0.350" r="0.750"><stop offset="0" stop-color="#ffc124"/><stop offset="0.600" stop-color="#f89a12"/><stop offset="1" stop-color="#e8700c"/></radialGradient></defs><circle cx="8" cy="8" r="7.500" fill="url(#wsn)"/></svg>
<div class="abs tk" style="left:764px;top:7.6px;font-size:10.200px;line-height:12px;letter-spacing:-0.550px;word-spacing:2.500px" id="wth">5°C Sunny</div>
<svg class="abs" viewBox="0 0 10 6" width="9" height="5.400" style="left:826px;top:11px"><path d="M0.800,5.200 L5,1 L9.200,5.200" fill="none" stroke="#f0f0f0" stroke-width="1.100"/></svg>
<svg class="abs" viewBox="0 0 12 12" width="11" height="11" style="left:841px;top:8.3px"><rect x="1.500" y="2.600" width="6.600" height="6.600" rx="1.600" fill="none" stroke="#e8e8e8" stroke-width="0.900"/><path d="M8.100,5 l2.600,-1.400 v4.800 l-2.600,-1.400 M2,1 h5.600 M2,11 h5.600" fill="none" stroke="#e8e8e8" stroke-width="0.900"/></svg>
<svg class="abs" viewBox="0 0 8 13" width="8" height="13" style="left:858px;top:6.5px"><rect x="1.800" y="0.500" width="4.400" height="7.500" rx="0.800" fill="#f0f0f0"/><path d="M0.800,8 h6.400 v2 q0,1.400 -1.400,1.400 h-3.600 q-1.400,0 -1.400,-1.400z" fill="#d8d8d8"/><rect x="2.600" y="11.400" width="2.800" height="1.200" fill="#bcbcbc"/></svg>
<svg class="abs" viewBox="0 0 14 12" width="13" height="11" style="left:872px;top:8.2px"><rect x="0.800" y="0.800" width="11.600" height="8.800" rx="1" fill="none" stroke="#f0f0f0" stroke-width="1"/><path d="M3,7.600 a3,3 0 0 1 3,-3 M3,5.600 a1.400,1.400 0 0 1 1.400,-1.400" fill="none" stroke="#f0f0f0" stroke-width="0.800"/><rect x="6.400" y="3.200" width="3.800" height="2.600" fill="none" stroke="#f0f0f0" stroke-width="0.700"/><circle cx="10.600" cy="9.600" r="2.200" fill="#2f8ee8"/></svg>
<svg class="abs" viewBox="0 0 14 8" width="12" height="7" style="left:889px;top:10.3px"><rect x="0.600" y="0.800" width="11" height="6.400" rx="0.800" fill="none" stroke="#f0f0f0" stroke-width="1"/><rect x="1.800" y="2" width="5.600" height="4" fill="#f0f0f0"/><rect x="12.200" y="2.600" width="1.400" height="2.800" fill="#f0f0f0"/></svg>
<svg class="abs" viewBox="0 0 14 12" width="12" height="10.500" style="left:904.500px;top:8.6px"><path d="M0.800,4 h2.400 l3,-2.800 v9.600 l-3,-2.800 h-2.400z" fill="none" stroke="#f0f0f0" stroke-width="0.900" stroke-linejoin="round"/><path d="M8.200,3.800 q1.600,2.200 0,4.400 M10,2.400 q2.600,3.600 0,7.200 M11.800,1.200 q3.400,4.800 0,9.600" fill="none" stroke="#d0d0d0" stroke-width="0.800"/></svg>
<div class="abs tk" style="left:923.800px;top:8.4px;font-size:8.100px;line-height:11px;letter-spacing:-0.550px">ENG</div>
<div class="abs tk" style="left:935.600px;top:2.6px;width:60px;text-align:center;font-size:8.300px;line-height:11px;letter-spacing:-0.500px">9:05</div>
<div class="abs tk" style="left:935.400px;top:14.6px;width:60px;text-align:center;font-size:8.300px;line-height:11px;letter-spacing:-0.500px">08.05.2025</div>
<svg class="abs" viewBox="0 0 13 13" width="12.500" height="12.500" style="left:996px;top:7.4px"><path d="M1,1 h10.600 v9 h-4 l-1.300,1.300 l-1.300,-1.300 h-4z" fill="none" stroke="#f0f0f0" stroke-width="1" stroke-linejoin="round"/></svg>
<div class="abs" style="left:1020.500px;top:0;width:1px;height:27px;background:#3a444e"></div>
</div>
</div>
</body>
</html>
